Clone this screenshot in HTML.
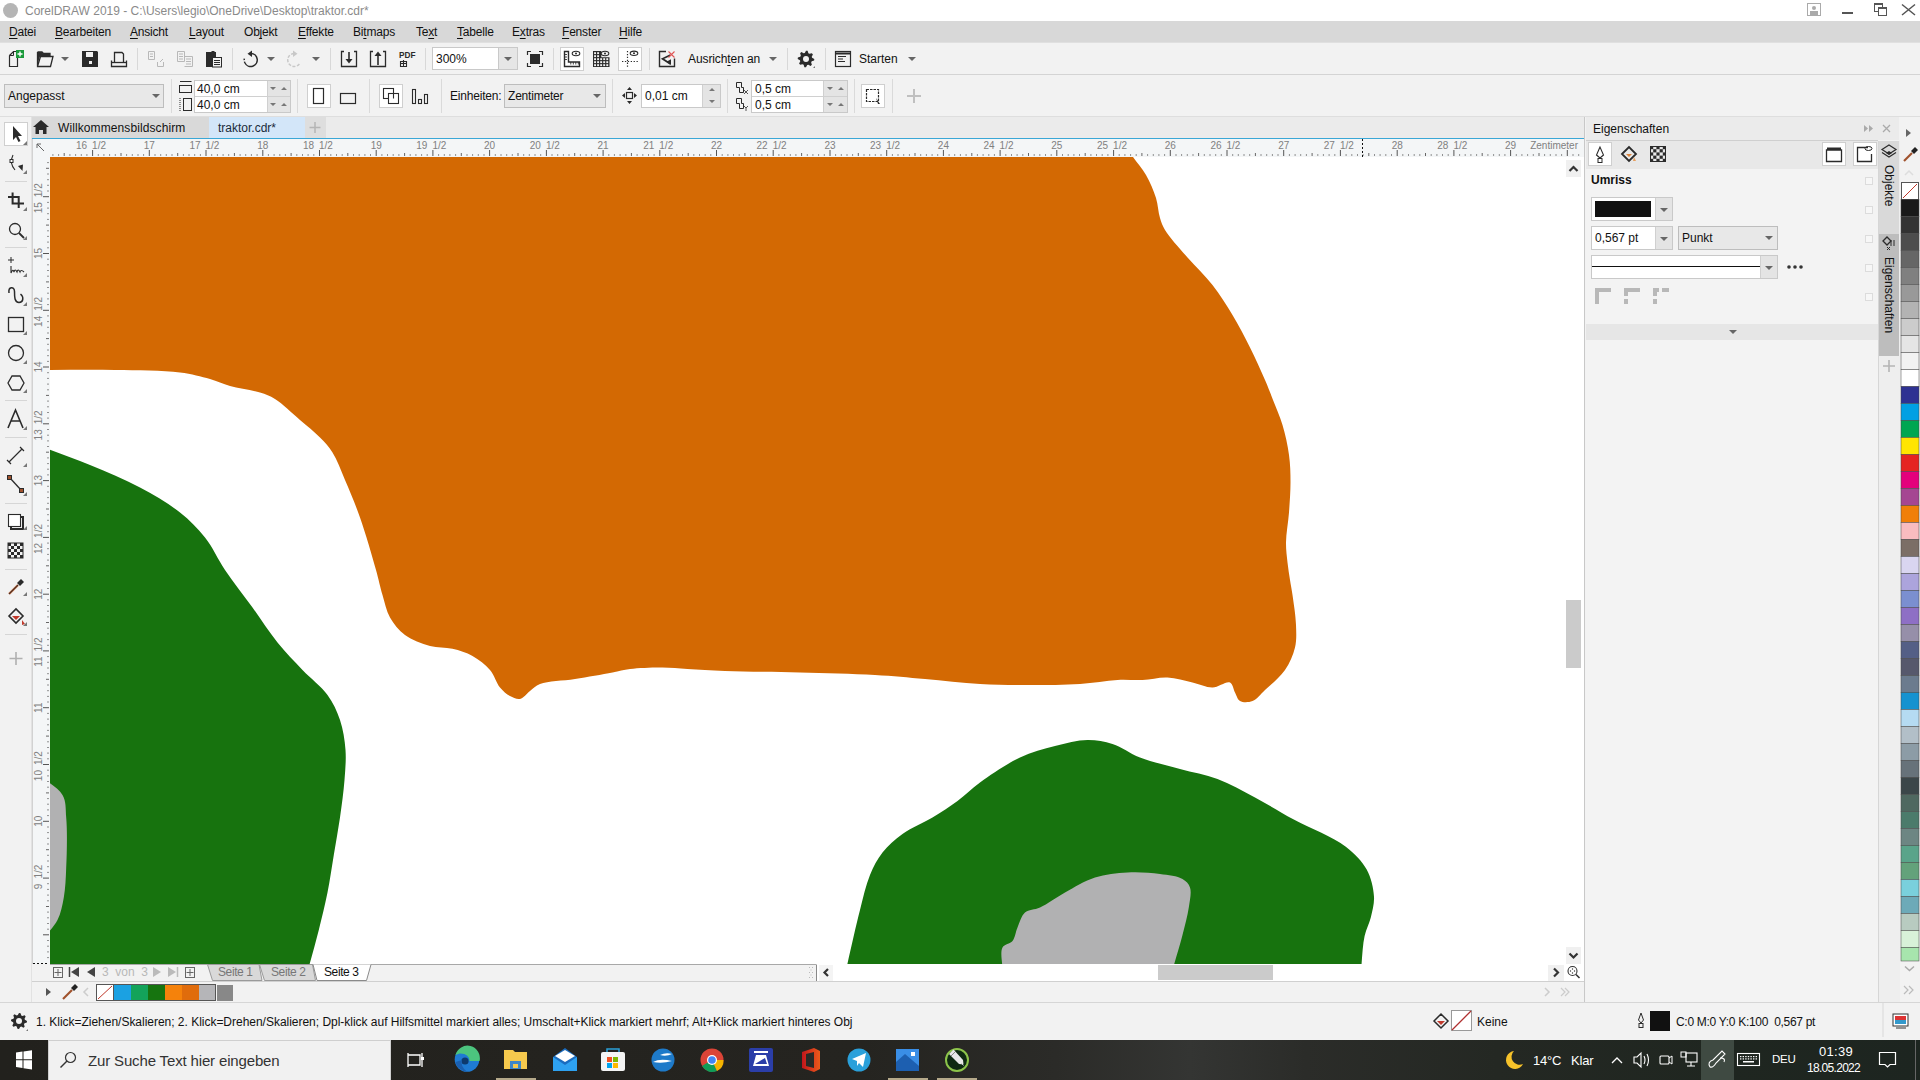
<!DOCTYPE html><html><head><meta charset="utf-8"><style>
html,body{margin:0;padding:0;width:1920px;height:1080px;overflow:hidden;background:#f2f2f2;font-family:"Liberation Sans", sans-serif;}
.t{position:absolute;white-space:nowrap;line-height:1;}
.a{position:absolute;}
svg{position:absolute;overflow:visible;}
u{text-decoration:underline;text-underline-offset:1.5px;text-decoration-thickness:1px;}
</style></head><body>
<div style="position:absolute;left:0px;top:0px;width:1920px;height:21px;background:#fff"></div>
<div style="position:absolute;left:3px;top:3px;width:15px;height:15px;background:#b5b5b5;border-radius:50%"></div>
<div class="t" style="left:25px;top:5px;font-size:12px;color:#8a8a8a;">CorelDRAW 2019 - C:\Users\legio\OneDrive\Desktop\traktor.cdr*</div>
<svg style="left:1800px;top:0" width="120" height="21"><rect x="7.5" y="3.5" width="13" height="12" fill="none" stroke="#aaa"/><circle cx="14" cy="8" r="2" fill="#aaa"/><rect x="10" y="11" width="8" height="4" fill="#aaa"/><rect x="42" y="12" width="11" height="2" fill="#555"/><rect x="74.5" y="3.5" width="8" height="8" fill="#fff" stroke="#555"/><path d="M74.5,4.5 H82.5" stroke="#555"/><rect x="78.5" y="7.5" width="8" height="8" fill="#fff" stroke="#555"/><path d="M78.5,8.5 H86.5" stroke="#555"/><path d="M102,4.5 L115,15 M115,4.5 L102,15" stroke="#555" stroke-width="1.5"/></svg>
<div style="position:absolute;left:0px;top:21px;width:1920px;height:22px;background:#d8d8d8"></div>
<div class="t" style="left:9px;top:26px;font-size:12px;color:#111;letter-spacing:-0.2px"><u>D</u>atei</div>
<div class="t" style="left:55px;top:26px;font-size:12px;color:#111;letter-spacing:-0.2px"><u>B</u>earbeiten</div>
<div class="t" style="left:130px;top:26px;font-size:12px;color:#111;letter-spacing:-0.2px"><u>A</u>nsicht</div>
<div class="t" style="left:189px;top:26px;font-size:12px;color:#111;letter-spacing:-0.2px"><u>L</u>ayout</div>
<div class="t" style="left:244px;top:26px;font-size:12px;color:#111;letter-spacing:-0.2px">Ob<u>j</u>ekt</div>
<div class="t" style="left:298px;top:26px;font-size:12px;color:#111;letter-spacing:-0.2px"><u>E</u>ffekte</div>
<div class="t" style="left:353px;top:26px;font-size:12px;color:#111;letter-spacing:-0.2px">Bi<u>t</u>maps</div>
<div class="t" style="left:416px;top:26px;font-size:12px;color:#111;letter-spacing:-0.2px">Te<u>x</u>t</div>
<div class="t" style="left:457px;top:26px;font-size:12px;color:#111;letter-spacing:-0.2px"><u>T</u>abelle</div>
<div class="t" style="left:512px;top:26px;font-size:12px;color:#111;letter-spacing:-0.2px">E<u>x</u>tras</div>
<div class="t" style="left:562px;top:26px;font-size:12px;color:#111;letter-spacing:-0.2px"><u>F</u>enster</div>
<div class="t" style="left:619px;top:26px;font-size:12px;color:#111;letter-spacing:-0.2px"><u>H</u>ilfe</div>
<div style="position:absolute;left:0px;top:43px;width:1920px;height:31px;background:#f2f2f2"></div>
<div style="position:absolute;left:0px;top:74px;width:1920px;height:1px;background:#d4d4d4"></div>
<div style="position:absolute;left:0px;top:42px;width:1920px;height:1px;background:#e0e0e0"></div>
<div style="position:absolute;left:137px;top:48px;width:1px;height:22px;background:#d8d8d8"></div>
<div style="position:absolute;left:232px;top:48px;width:1px;height:22px;background:#d8d8d8"></div>
<div style="position:absolute;left:330px;top:48px;width:1px;height:22px;background:#d8d8d8"></div>
<div style="position:absolute;left:425px;top:48px;width:1px;height:22px;background:#d8d8d8"></div>
<div style="position:absolute;left:553px;top:48px;width:1px;height:22px;background:#d8d8d8"></div>
<div style="position:absolute;left:649px;top:48px;width:1px;height:22px;background:#d8d8d8"></div>
<div style="position:absolute;left:787px;top:48px;width:1px;height:22px;background:#d8d8d8"></div>
<div style="position:absolute;left:825px;top:48px;width:1px;height:22px;background:#d8d8d8"></div>
<div style="position:absolute;left:432px;top:47px;width:67px;height:23px;background:#fff;border:1px solid #c9c9c9;box-sizing:border-box"></div>
<div style="position:absolute;left:498px;top:47px;width:20px;height:23px;background:#e6e6e6;border:1px solid #c9c9c9;box-sizing:border-box"></div>
<div class="t" style="left:436px;top:53px;font-size:12px;color:#111;">300%</div>
<div style="position:absolute;left:560px;top:47px;width:24px;height:24px;background:#fff;border:1px solid #cfcfcf;box-sizing:border-box"></div>
<div style="position:absolute;left:618px;top:47px;width:24px;height:24px;background:#fff;border:1px solid #cfcfcf;box-sizing:border-box"></div>
<div class="t" style="left:688px;top:53px;font-size:12px;color:#111;letter-spacing:-0.1px">Ausrich<u>t</u>en an</div>
<div class="t" style="left:859px;top:53px;font-size:12px;color:#111;">Starten</div>
<svg style="left:0;top:0" width="1920" height="80"><path d="M9.5,55.5 L13.5,51.5 L17.5,51.5 M9.5,55.5 L9.5,66.5 L17.5,66.5 L17.5,58" fill="none" stroke="#2b2b2b" stroke-width="1.2"/><path d="M9.5,55.5 L13.5,55.5 L13.5,51.5" fill="none" stroke="#2b2b2b"/><rect x="16" y="50" width="8" height="8" fill="#1a9a3a"/><path d="M20,51.5 V56.5 M17.5,54 H22.5" stroke="#fff" stroke-width="1.4"/><path d="M37.5,52 H42 L43.5,53.5 H50 V56 M37.5,52 V66.5 H50.5 L53,56.5 H40.5 L37.5,66.5" fill="none" stroke="#2b2b2b" stroke-width="1.3"/><path d="M37,52 H42 L43.5,54 H50 V56.5 H40 L37.5,64 Z" fill="#2b2b2b"/><path d="M61,57 H69 L65,61 Z" fill="#666"/><path d="M82,51 H97 L98,52 V67 H82 Z" fill="#2b2b2b"/><rect x="86" y="52" width="7" height="5" fill="#f2f2f2"/><rect x="89" y="61" width="3" height="3" fill="#f2f2f2"/><path d="M114.5,62 V52.5 H122 L123.5,54 V62 M111.5,60.5 V66.5 H126.5 V60.5" fill="none" stroke="#2b2b2b" stroke-width="1.3"/><path d="M111.5,62.5 H126.5" stroke="#2b2b2b" stroke-width="1.3"/><path d="M148.5,51.5 H154.5 V59.5 H148.5 Z M150,54 H153 M150,56.5 H153 M157.5,62 V66.5 H163.5 V62 M160,62 L163,59" fill="none" stroke="#b8b8b8"/><path d="M177.5,51.5 H184.5 V61.5 H177.5 Z M179,54 H183 M179,56.5 H183 M179,59 H183 M184.5,56.5 H192.5 V66.5 H184.5 M186,59 H191 M186,61.5 H191 M186,64 H191" fill="none" stroke="#b8b8b8"/><path d="M206,52 H211 L212,51 H214 L215,52 H216 V67 H206 Z" fill="#2b2b2b"/><rect x="212.5" y="57.5" width="9" height="9.5" fill="#f2f2f2" stroke="#2b2b2b"/><path d="M214,60.5 H220 M214,62.5 H220 M214,64.5 H220" stroke="#2b2b2b"/><path d="M251,53.5 A6.5,6.5 0 1 1 245,63" fill="none" stroke="#2b2b2b" stroke-width="1.5"/><path d="M245,63 A6.5,6.5 0 0 1 244.5,58" fill="none" stroke="#2b2b2b" stroke-width="1.5" stroke-dasharray="1.5 1.5"/><path d="M252,50.5 L247.5,53.8 L252,57 Z" fill="#2b2b2b"/><path d="M267,57 H275 L271,61 Z" fill="#666"/><path d="M294,53.5 A6.5,6.5 0 1 0 300,63" fill="none" stroke="#c8c8c8" stroke-width="1.5" stroke-dasharray="3 1.5"/><path d="M293,50.5 L297.5,53.8 L293,57 Z" fill="#c8c8c8"/><path d="M312,57 H320 L316,61 Z" fill="#666"/><path d="M344,51.5 H341.5 V66.5 H356.5 V51.5 H354" fill="none" stroke="#2b2b2b" stroke-width="1.3"/><path d="M349,52 V62" stroke="#2b2b2b" stroke-width="1.6"/><path d="M345.5,59 H352.5 L349,63.5 Z" fill="#2b2b2b"/><path d="M373,51.5 H370.5 V66.5 H385.5 V51.5 H383" fill="none" stroke="#2b2b2b" stroke-width="1.3"/><path d="M378,56 V65" stroke="#2b2b2b" stroke-width="1.6"/><path d="M374.5,56 H381.5 L378,51.5 Z" fill="#2b2b2b"/><text x="399" y="58.3" font-family="Liberation Sans" font-size="8.5" font-weight="bold" fill="#2b2b2b" textLength="16.5" lengthAdjust="spacingAndGlyphs">PDF</text><path d="M400.5,61.5 H406.5 V66.5 H400.5 Z M403.5,60 V66.5 M400.5,63.5 H406.5" fill="none" stroke="#2b2b2b" stroke-width="1.1"/><path d="M504,57 H512 L508,61 Z" fill="#666"/><rect x="530" y="54" width="10" height="10" fill="#2b2b2b"/><path d="M527.5,55 V51.5 H531 M539,51.5 H542.5 V55 M542.5,63 V66.5 H539 M531,66.5 H527.5 V63" fill="none" stroke="#2b2b2b" stroke-width="1.2"/><path d="M564.5,51.5 V66.5 H579.5 V62 H568.5 V51.5 Z" fill="none" stroke="#2b2b2b" stroke-width="1.4"/><path d="M565,54.5 H567 M565,57 H567 M565,59.5 H567 M570.8,62 V64.5 M573.3,62 V64.5 M575.8,62 V64.5 M578.3,62 V64.5" stroke="#2b2b2b" stroke-width="0.9"/><ellipse cx="576" cy="53.5" rx="3.8" ry="2.2" fill="#fff" stroke="#2b2b2b" stroke-width="1.1"/><circle cx="576" cy="53.5" r="1" fill="#2b2b2b"/><path d="M593,51 H601.3 V57.2 H609.5 V67 H593 Z" fill="#2b2b2b"/><rect x="594.10" y="52.20" width="1.9" height="1.9" fill="#f2f2f2"/><rect x="594.10" y="55.20" width="1.9" height="1.9" fill="#f2f2f2"/><rect x="594.10" y="58.20" width="1.9" height="1.9" fill="#f2f2f2"/><rect x="594.10" y="61.20" width="1.9" height="1.9" fill="#f2f2f2"/><rect x="594.10" y="64.20" width="1.9" height="1.9" fill="#f2f2f2"/><rect x="597.15" y="52.20" width="1.9" height="1.9" fill="#f2f2f2"/><rect x="597.15" y="55.20" width="1.9" height="1.9" fill="#f2f2f2"/><rect x="597.15" y="58.20" width="1.9" height="1.9" fill="#f2f2f2"/><rect x="597.15" y="61.20" width="1.9" height="1.9" fill="#f2f2f2"/><rect x="597.15" y="64.20" width="1.9" height="1.9" fill="#f2f2f2"/><rect x="600.20" y="58.20" width="1.9" height="1.9" fill="#f2f2f2"/><rect x="600.20" y="61.20" width="1.9" height="1.9" fill="#f2f2f2"/><rect x="600.20" y="64.20" width="1.9" height="1.9" fill="#f2f2f2"/><rect x="603.25" y="58.20" width="1.9" height="1.9" fill="#f2f2f2"/><rect x="603.25" y="61.20" width="1.9" height="1.9" fill="#f2f2f2"/><rect x="603.25" y="64.20" width="1.9" height="1.9" fill="#f2f2f2"/><rect x="606.30" y="58.20" width="1.9" height="1.9" fill="#f2f2f2"/><rect x="606.30" y="61.20" width="1.9" height="1.9" fill="#f2f2f2"/><rect x="606.30" y="64.20" width="1.9" height="1.9" fill="#f2f2f2"/><ellipse cx="605" cy="53.5" rx="3.8" ry="2.2" fill="#f2f2f2" stroke="#2b2b2b" stroke-width="1.1"/><circle cx="605" cy="53.5" r="1" fill="#2b2b2b"/><path d="M627.5,51 V67 M622,61.5 H638.5" stroke="#2b2b2b" stroke-width="1.2" stroke-dasharray="1.3 1.6"/><ellipse cx="634" cy="53.3" rx="3.8" ry="2.2" fill="#fff" stroke="#2b2b2b" stroke-width="1.1"/><circle cx="634" cy="53.3" r="1" fill="#2b2b2b"/><path d="M666,51.5 H659.5 V66.5 H674.5 V58.5" fill="none" stroke="#2b2b2b" stroke-width="1.4"/><path d="M670.5,55 L662.5,58.8 L670.5,64" fill="none" stroke="#2b2b2b" stroke-width="1.7"/><path d="M666.5,61.8 L671,59.3 V65 Z" fill="#2b2b2b"/><path d="M668.5,51.5 L674.5,57.5 M674.5,51.5 L668.5,57.5" stroke="#e05555" stroke-width="1.1"/><path d="M769,57 H777 L773,61 Z" fill="#666"/><path d="M806.00,50.70 L807.62,50.86 L808.37,53.27 L809.44,53.84 L811.87,53.13 L812.90,54.39 L811.73,56.63 L812.08,57.79 L814.30,59.00 L814.14,60.62 L811.73,61.37 L811.16,62.44 L811.87,64.87 L810.61,65.90 L808.37,64.73 L807.21,65.08 L806.00,67.30 L804.38,67.14 L803.63,64.73 L802.56,64.16 L800.13,64.87 L799.10,63.61 L800.27,61.37 L799.92,60.21 L797.70,59.00 L797.86,57.38 L800.27,56.63 L800.84,55.56 L800.13,53.13 L801.39,52.10 L803.63,53.27 L804.79,52.92 Z" fill="#2b2b2b"/><circle cx="806" cy="59" r="3" fill="#f2f2f2"/><path d="M815,66 L815,68 L813,68 Z" fill="#777"/><rect x="835.5" y="51.5" width="15" height="15" fill="none" stroke="#2b2b2b" stroke-width="1.2"/><path d="M836,53.5 H850" stroke="#2b2b2b" stroke-width="2"/><path d="M838,56.5 H846 M838,59 H843 M838,61.5 H845" stroke="#2b2b2b"/><path d="M908,57 H916 L912,61 Z" fill="#666"/></svg>
<div style="position:absolute;left:0px;top:75px;width:1920px;height:42px;background:#f2f2f2"></div>
<div style="position:absolute;left:0px;top:116px;width:1920px;height:1px;background:#dedede"></div>
<div style="position:absolute;left:171px;top:79px;width:1px;height:34px;background:#dadada"></div>
<div style="position:absolute;left:297px;top:79px;width:1px;height:34px;background:#dadada"></div>
<div style="position:absolute;left:369px;top:79px;width:1px;height:34px;background:#dadada"></div>
<div style="position:absolute;left:441px;top:79px;width:1px;height:34px;background:#dadada"></div>
<div style="position:absolute;left:612px;top:79px;width:1px;height:34px;background:#dadada"></div>
<div style="position:absolute;left:727px;top:79px;width:1px;height:34px;background:#dadada"></div>
<div style="position:absolute;left:854px;top:79px;width:1px;height:34px;background:#dadada"></div>
<div style="position:absolute;left:892px;top:79px;width:1px;height:34px;background:#dadada"></div>
<div style="position:absolute;left:4px;top:84px;width:160px;height:24px;background:#e8e8e8;border:1px solid #bdbdbd;box-sizing:border-box"></div>
<div class="t" style="left:8px;top:90px;font-size:12px;color:#111;">Angepasst</div>
<div style="position:absolute;left:194px;top:80px;width:97px;height:33px;background:#e4e4e4;border:1px solid #c9c9c9;box-sizing:border-box"></div>
<div style="position:absolute;left:195px;top:81px;width:72px;height:15px;background:#fff"></div>
<div style="position:absolute;left:195px;top:97px;width:72px;height:15px;background:#fff"></div>
<div style="position:absolute;left:195px;top:96px;width:95px;height:1px;background:#d0d0d0"></div>
<div style="position:absolute;left:267px;top:81px;width:1px;height:31px;background:#d0d0d0"></div>
<div class="t" style="left:197px;top:83px;font-size:12px;color:#111;">40,0 cm</div>
<div class="t" style="left:197px;top:99px;font-size:12px;color:#111;">40,0 cm</div>
<div style="position:absolute;left:307px;top:84px;width:24px;height:24px;background:#fff;border:1px solid #cfcfcf;box-sizing:border-box"></div>
<div style="position:absolute;left:379px;top:84px;width:24px;height:24px;background:#fff;border:1px solid #cfcfcf;box-sizing:border-box"></div>
<div class="t" style="left:450px;top:90px;font-size:12px;color:#111;letter-spacing:-0.2px">Einheiten:</div>
<div style="position:absolute;left:504px;top:84px;width:102px;height:24px;background:#e8e8e8;border:1px solid #bdbdbd;box-sizing:border-box"></div>
<div class="t" style="left:508px;top:90px;font-size:12px;color:#111;letter-spacing:-0.2px">Zentimeter</div>
<div style="position:absolute;left:641px;top:84px;width:80px;height:24px;background:#e4e4e4;border:1px solid #c9c9c9;box-sizing:border-box"></div>
<div style="position:absolute;left:642px;top:85px;width:61px;height:22px;background:#fff"></div>
<div style="position:absolute;left:702px;top:85px;width:1px;height:22px;background:#d0d0d0"></div>
<div class="t" style="left:645px;top:90px;font-size:12px;color:#111;">0,01 cm</div>
<div style="position:absolute;left:751px;top:80px;width:97px;height:33px;background:#e4e4e4;border:1px solid #c9c9c9;box-sizing:border-box"></div>
<div style="position:absolute;left:752px;top:81px;width:71px;height:15px;background:#fff"></div>
<div style="position:absolute;left:752px;top:97px;width:71px;height:15px;background:#fff"></div>
<div style="position:absolute;left:752px;top:96px;width:95px;height:1px;background:#d0d0d0"></div>
<div style="position:absolute;left:823px;top:81px;width:1px;height:31px;background:#d0d0d0"></div>
<div class="t" style="left:755px;top:83px;font-size:12px;color:#111;">0,5 cm</div>
<div class="t" style="left:755px;top:99px;font-size:12px;color:#111;">0,5 cm</div>
<div style="position:absolute;left:861px;top:84px;width:24px;height:24px;background:#fff;border:1px solid #cfcfcf;box-sizing:border-box"></div>
<svg style="left:0;top:0" width="1920" height="120"><path d="M152,94 H160 L156,98 Z" fill="#666"/><path d="M180,81.5 H191.5" stroke="#2b2b2b" /><rect x="179.5" y="85.5" width="12" height="7" fill="none" stroke="#2b2b2b"/><path d="M180,98 V111" stroke="#2b2b2b" stroke-dasharray="1 1"/><rect x="183.5" y="98.5" width="8" height="12" fill="none" stroke="#2b2b2b"/><path d="M270,87 H276 L273,90 Z M281,90 H287 L284,87 Z M270,103 H276 L273,106 Z M281,106 H287 L284,103 Z" fill="#777"/><rect x="313.5" y="88.5" width="10" height="15" fill="none" stroke="#2b2b2b" stroke-width="1.2"/><rect x="340.5" y="93.5" width="15" height="10" fill="none" stroke="#2b2b2b" stroke-width="1.2"/><rect x="383.5" y="88.5" width="10" height="10" fill="none" stroke="#2b2b2b" stroke-width="1.1"/><rect x="388.5" y="93.5" width="10" height="10" fill="#fff" stroke="#2b2b2b" stroke-width="1.1"/><path d="M388.5,93.5 H393.5 V98.5" fill="none" stroke="#2b2b2b" stroke-width="1.1"/><rect x="412.5" y="89.5" width="3" height="14" fill="none" stroke="#2b2b2b" stroke-width="1.1"/><rect x="418.5" y="99.5" width="3" height="4" fill="none" stroke="#2b2b2b" stroke-width="1.1"/><rect x="424.5" y="94.5" width="3" height="9" fill="none" stroke="#2b2b2b" stroke-width="1.1"/><path d="M593,94 H601 L597,98 Z" fill="#666"/><rect x="626.5" y="92.5" width="6" height="6" fill="none" stroke="#2b2b2b" stroke-width="1.2"/><path d="M629.5,87 L627,90 H632 Z M629.5,104 L627,101 H632 Z M622,95.5 L625,93 V98 Z M637,95.5 L634,93 V98 Z" fill="#2b2b2b"/><path d="M709,91 H715 L712,88 Z M709,100 H715 L712,103 Z" fill="#777"/><path d="M736.5,82.5 H741.5 V87.5 H743.5 V92.5 H739.5 V87.5 H736.5 Z" fill="none" stroke="#2b2b2b"/><path d="M744,90 L748,94 M748,90 L744,94" stroke="#2b2b2b" stroke-width="0.8"/><path d="M736.5,98.5 H741.5 V103.5 H743.5 V108.5 H739.5 V103.5 H736.5 Z" fill="none" stroke="#2b2b2b"/><path d="M744,106 L746,108 L748,106 M746,108 V111" stroke="#2b2b2b" stroke-width="0.8" fill="none"/><path d="M827,87 H833 L830,90 Z M838,90 H844 L841,87 Z M827,103 H833 L830,106 Z M838,106 H844 L841,103 Z" fill="#777"/><rect x="866.5" y="89.5" width="12" height="12" fill="none" stroke="#2b2b2b" stroke-width="1.2" stroke-dasharray="2.5 1"/><path d="M876,98 L880,104 L878,104 Z" fill="#2b2b2b"/><path d="M914,89 V103 M907,96 H921" stroke="#c0c0c0" stroke-width="2"/></svg>
<div style="position:absolute;left:0px;top:117px;width:32px;height:885px;background:#f2f2f2"></div>
<div style="position:absolute;left:31px;top:117px;width:1px;height:885px;background:#e2e2e2"></div>
<div style="position:absolute;left:4px;top:122px;width:24px;height:24px;background:#fff;border:1px solid #cfcfcf;box-sizing:border-box"></div>
<div style="position:absolute;left:5px;top:181px;width:22px;height:1px;background:#d6d6d6"></div>
<div style="position:absolute;left:5px;top:247px;width:22px;height:1px;background:#d6d6d6"></div>
<div style="position:absolute;left:5px;top:400px;width:22px;height:1px;background:#d6d6d6"></div>
<div style="position:absolute;left:5px;top:437px;width:22px;height:1px;background:#d6d6d6"></div>
<div style="position:absolute;left:5px;top:503px;width:22px;height:1px;background:#d6d6d6"></div>
<div style="position:absolute;left:5px;top:569px;width:22px;height:1px;background:#d6d6d6"></div>
<div style="position:absolute;left:5px;top:634px;width:22px;height:1px;background:#d6d6d6"></div>
<svg style="left:0;top:0" width="40" height="700"><path d="M13,126 L13,140 L16,137 L18.5,142 L20.5,141 L18,136 L22,136 Z" fill="#2b2b2b"/><path d="M27,145 L23,145 L27,141 Z" fill="#777"/><path d="M13,155 Q9,163 15,170" fill="none" stroke="#2b2b2b" stroke-width="1.1"/><rect x="10" y="159.5" width="3" height="3" fill="#fff" stroke="#2b2b2b"/><path d="M18,166 L23,164.5 L22.5,171 Z" fill="#2b2b2b"/><path d="M27,174 L23,174 L27,170 Z" fill="#777"/><path d="M8,197 H18.7 V208 M12.6,192.5 V203.5 H24" fill="none" stroke="#2b2b2b" stroke-width="2"/><path d="M27,211 L23,211 L27,207 Z" fill="#777"/><circle cx="15" cy="229" r="5.5" fill="none" stroke="#2b2b2b" stroke-width="1.3"/><path d="M19,233 L24,238" stroke="#2b2b2b" stroke-width="1.8"/><path d="M27,240 L23,240 L27,236 Z" fill="#777"/><path d="M11,257 V263 M8,260 H14" stroke="#2b2b2b"/><path d="M11,266 V273 Q13,268 14,272 Q15,268 17,272 Q18,268 20,272 Q21,269 24,272" fill="none" stroke="#2b2b2b" stroke-width="1.1"/><path d="M27,277 L23,277 L27,273 Z" fill="#777"/><path d="M9,293 C8,286.5 14.5,286 14.5,291.5 C14.5,297 14.5,302.5 19,302.5 C23.5,302.5 24,297 20.5,294" fill="none" stroke="#2b2b2b" stroke-width="1.5"/><path d="M27,306 L23,306 L27,302 Z" fill="#777"/><rect x="8.5" y="317.5" width="15" height="14" fill="none" stroke="#2b2b2b" stroke-width="1.3"/><path d="M27,335 L23,335 L27,331 Z" fill="#777"/><circle cx="16" cy="353" r="7.5" fill="none" stroke="#2b2b2b" stroke-width="1.3"/><path d="M27,364 L23,364 L27,360 Z" fill="#777"/><path d="M12,376 H20 L24,383 L20,390 H12 L8,383 Z" fill="none" stroke="#2b2b2b" stroke-width="1.3"/><path d="M27,393 L23,393 L27,389 Z" fill="#777"/><path d="M8,428 L15.5,410 L23,428 M10.5,421 H20.5" fill="none" stroke="#2b2b2b" stroke-width="1.6"/><path d="M27,430 L23,430 L27,426 Z" fill="#777"/><path d="M9,462 L22,449 M7,460 L11,464 M20,447 L24,451" stroke="#2b2b2b" stroke-width="1.2"/><path d="M27,467 L23,467 L27,463 Z" fill="#777"/><path d="M10,478 L21,490" stroke="#2b2b2b" stroke-width="1.3"/><rect x="7.5" y="475.5" width="4" height="4" fill="#a0522d" stroke="#2b2b2b"/><rect x="19.5" y="488.5" width="4" height="4" fill="#a0522d" stroke="#2b2b2b"/><path d="M27,496 L23,496 L27,492 Z" fill="#777"/><rect x="8.5" y="514.5" width="12" height="12" fill="#fff" stroke="#2b2b2b" stroke-width="1.1"/><path d="M21,517 H23 V529 H11 V527" fill="none" stroke="#2b2b2b" stroke-width="2"/><path d="M27,530 L23,530 L27,526 Z" fill="#777"/><rect x="8" y="543" width="3" height="3" fill="#2b2b2b"/><rect x="8" y="549" width="3" height="3" fill="#2b2b2b"/><rect x="8" y="555" width="3" height="3" fill="#2b2b2b"/><rect x="11" y="546" width="3" height="3" fill="#2b2b2b"/><rect x="11" y="552" width="3" height="3" fill="#2b2b2b"/><rect x="14" y="543" width="3" height="3" fill="#2b2b2b"/><rect x="14" y="549" width="3" height="3" fill="#2b2b2b"/><rect x="14" y="555" width="3" height="3" fill="#2b2b2b"/><rect x="17" y="546" width="3" height="3" fill="#2b2b2b"/><rect x="17" y="552" width="3" height="3" fill="#2b2b2b"/><rect x="20" y="543" width="3" height="3" fill="#2b2b2b"/><rect x="20" y="549" width="3" height="3" fill="#2b2b2b"/><rect x="20" y="555" width="3" height="3" fill="#2b2b2b"/><rect x="8" y="543" width="15" height="15" fill="none" stroke="#2b2b2b"/><path d="M9,594 L18,585" stroke="#a0522d" stroke-width="2.2"/><path d="M9,594 L18,585" stroke="#2b2b2b" stroke-width="0.8"/><path d="M17,583 L21,579 L24,582 L20,586 Z" fill="#2b2b2b"/><path d="M27,596 L23,596 L27,592 Z" fill="#777"/><path d="M9,616 L16,609 L23,616 L16,623 Z" fill="none" stroke="#2b2b2b" stroke-width="1.6"/><path d="M12,616 H20 L16,620 Z" fill="#c0392b"/><path d="M22,620 L25,624 L22,625 Z" fill="#c0392b"/><path d="M27,626 L23,626 L27,622 Z" fill="#777"/><path d="M16,652 V665 M9.5,658.5 H22.5" stroke="#b0b0b0" stroke-width="1.6"/></svg>
<div style="position:absolute;left:32px;top:117px;width:1552px;height:21px;background:#ebebeb"></div>
<div style="position:absolute;left:32px;top:117px;width:177px;height:21px;background:#d9d9d9"></div>
<div style="position:absolute;left:209px;top:117px;width:96px;height:21px;background:#d3e6f9"></div>
<div style="position:absolute;left:305px;top:117px;width:21px;height:21px;background:#dedede"></div>
<svg style="left:0;top:0" width="400" height="140"><path d="M41,120 L33,127 H35.5 V134 H39 V130 H43 V134 H46.5 V127 H49 Z" fill="#2b2b2b"/><path d="M315,122 V133 M309.5,127.5 H320.5" stroke="#b5b5b5" stroke-width="1.5"/></svg>
<div class="t" style="left:58px;top:122px;font-size:12px;color:#111;letter-spacing:0.1px">Willkommensbildschirm</div>
<div class="t" style="left:218px;top:122px;font-size:12px;color:#1a2a3a;">traktor.cdr*</div>
<div style="position:absolute;left:32px;top:138px;width:1552px;height:1px;background:#3aa7d6"></div>
<div style="position:absolute;left:32px;top:139px;width:1552px;height:18px;background:#f4f6f7"></div>
<div style="position:absolute;left:32px;top:139px;width:18px;height:825px;background:#f4f6f7"></div>
<div style="position:absolute;left:32px;top:139px;width:1px;height:825px;background:#d2d2d2"></div>
<svg style="left:0;top:0" width="1600" height="160"><path d="M52.9,154 V156" stroke="#777" stroke-width="0.8"/><path d="M58.6,154 V156" stroke="#777" stroke-width="0.8"/><path d="M64.2,153 V156" stroke="#666"/><path d="M69.9,154 V156" stroke="#777" stroke-width="0.8"/><path d="M75.6,154 V156" stroke="#777" stroke-width="0.8"/><path d="M81.3,154 V156" stroke="#777" stroke-width="0.8"/><path d="M86.9,154 V156" stroke="#777" stroke-width="0.8"/><path d="M92.6,150 V156" stroke="#555"/><path d="M98.3,154 V156" stroke="#777" stroke-width="0.8"/><path d="M103.9,154 V156" stroke="#777" stroke-width="0.8"/><path d="M109.6,154 V156" stroke="#777" stroke-width="0.8"/><path d="M115.3,154 V156" stroke="#777" stroke-width="0.8"/><path d="M121.0,153 V156" stroke="#666"/><path d="M126.6,154 V156" stroke="#777" stroke-width="0.8"/><path d="M132.3,154 V156" stroke="#777" stroke-width="0.8"/><path d="M138.0,154 V156" stroke="#777" stroke-width="0.8"/><path d="M143.6,154 V156" stroke="#777" stroke-width="0.8"/><path d="M149.3,150 V156" stroke="#555"/><path d="M155.0,154 V156" stroke="#777" stroke-width="0.8"/><path d="M160.7,154 V156" stroke="#777" stroke-width="0.8"/><path d="M166.3,154 V156" stroke="#777" stroke-width="0.8"/><path d="M172.0,154 V156" stroke="#777" stroke-width="0.8"/><path d="M177.7,153 V156" stroke="#666"/><path d="M183.4,154 V156" stroke="#777" stroke-width="0.8"/><path d="M189.0,154 V156" stroke="#777" stroke-width="0.8"/><path d="M194.7,154 V156" stroke="#777" stroke-width="0.8"/><path d="M200.4,154 V156" stroke="#777" stroke-width="0.8"/><path d="M206.0,150 V156" stroke="#555"/><path d="M211.7,154 V156" stroke="#777" stroke-width="0.8"/><path d="M217.4,154 V156" stroke="#777" stroke-width="0.8"/><path d="M223.1,154 V156" stroke="#777" stroke-width="0.8"/><path d="M228.7,154 V156" stroke="#777" stroke-width="0.8"/><path d="M234.4,153 V156" stroke="#666"/><path d="M240.1,154 V156" stroke="#777" stroke-width="0.8"/><path d="M245.7,154 V156" stroke="#777" stroke-width="0.8"/><path d="M251.4,154 V156" stroke="#777" stroke-width="0.8"/><path d="M257.1,154 V156" stroke="#777" stroke-width="0.8"/><path d="M262.8,150 V156" stroke="#555"/><path d="M268.4,154 V156" stroke="#777" stroke-width="0.8"/><path d="M274.1,154 V156" stroke="#777" stroke-width="0.8"/><path d="M279.8,154 V156" stroke="#777" stroke-width="0.8"/><path d="M285.4,154 V156" stroke="#777" stroke-width="0.8"/><path d="M291.1,153 V156" stroke="#666"/><path d="M296.8,154 V156" stroke="#777" stroke-width="0.8"/><path d="M302.5,154 V156" stroke="#777" stroke-width="0.8"/><path d="M308.1,154 V156" stroke="#777" stroke-width="0.8"/><path d="M313.8,154 V156" stroke="#777" stroke-width="0.8"/><path d="M319.5,150 V156" stroke="#555"/><path d="M325.2,154 V156" stroke="#777" stroke-width="0.8"/><path d="M330.8,154 V156" stroke="#777" stroke-width="0.8"/><path d="M336.5,154 V156" stroke="#777" stroke-width="0.8"/><path d="M342.2,154 V156" stroke="#777" stroke-width="0.8"/><path d="M347.8,153 V156" stroke="#666"/><path d="M353.5,154 V156" stroke="#777" stroke-width="0.8"/><path d="M359.2,154 V156" stroke="#777" stroke-width="0.8"/><path d="M364.9,154 V156" stroke="#777" stroke-width="0.8"/><path d="M370.5,154 V156" stroke="#777" stroke-width="0.8"/><path d="M376.2,150 V156" stroke="#555"/><path d="M381.9,154 V156" stroke="#777" stroke-width="0.8"/><path d="M387.5,154 V156" stroke="#777" stroke-width="0.8"/><path d="M393.2,154 V156" stroke="#777" stroke-width="0.8"/><path d="M398.9,154 V156" stroke="#777" stroke-width="0.8"/><path d="M404.6,153 V156" stroke="#666"/><path d="M410.2,154 V156" stroke="#777" stroke-width="0.8"/><path d="M415.9,154 V156" stroke="#777" stroke-width="0.8"/><path d="M421.6,154 V156" stroke="#777" stroke-width="0.8"/><path d="M427.2,154 V156" stroke="#777" stroke-width="0.8"/><path d="M432.9,150 V156" stroke="#555"/><path d="M438.6,154 V156" stroke="#777" stroke-width="0.8"/><path d="M444.3,154 V156" stroke="#777" stroke-width="0.8"/><path d="M449.9,154 V156" stroke="#777" stroke-width="0.8"/><path d="M455.6,154 V156" stroke="#777" stroke-width="0.8"/><path d="M461.3,153 V156" stroke="#666"/><path d="M467.0,154 V156" stroke="#777" stroke-width="0.8"/><path d="M472.6,154 V156" stroke="#777" stroke-width="0.8"/><path d="M478.3,154 V156" stroke="#777" stroke-width="0.8"/><path d="M484.0,154 V156" stroke="#777" stroke-width="0.8"/><path d="M489.6,150 V156" stroke="#555"/><path d="M495.3,154 V156" stroke="#777" stroke-width="0.8"/><path d="M501.0,154 V156" stroke="#777" stroke-width="0.8"/><path d="M506.7,154 V156" stroke="#777" stroke-width="0.8"/><path d="M512.3,154 V156" stroke="#777" stroke-width="0.8"/><path d="M518.0,153 V156" stroke="#666"/><path d="M523.7,154 V156" stroke="#777" stroke-width="0.8"/><path d="M529.3,154 V156" stroke="#777" stroke-width="0.8"/><path d="M535.0,154 V156" stroke="#777" stroke-width="0.8"/><path d="M540.7,154 V156" stroke="#777" stroke-width="0.8"/><path d="M546.4,150 V156" stroke="#555"/><path d="M552.0,154 V156" stroke="#777" stroke-width="0.8"/><path d="M557.7,154 V156" stroke="#777" stroke-width="0.8"/><path d="M563.4,154 V156" stroke="#777" stroke-width="0.8"/><path d="M569.0,154 V156" stroke="#777" stroke-width="0.8"/><path d="M574.7,153 V156" stroke="#666"/><path d="M580.4,154 V156" stroke="#777" stroke-width="0.8"/><path d="M586.1,154 V156" stroke="#777" stroke-width="0.8"/><path d="M591.7,154 V156" stroke="#777" stroke-width="0.8"/><path d="M597.4,154 V156" stroke="#777" stroke-width="0.8"/><path d="M603.1,150 V156" stroke="#555"/><path d="M608.8,154 V156" stroke="#777" stroke-width="0.8"/><path d="M614.4,154 V156" stroke="#777" stroke-width="0.8"/><path d="M620.1,154 V156" stroke="#777" stroke-width="0.8"/><path d="M625.8,154 V156" stroke="#777" stroke-width="0.8"/><path d="M631.4,153 V156" stroke="#666"/><path d="M637.1,154 V156" stroke="#777" stroke-width="0.8"/><path d="M642.8,154 V156" stroke="#777" stroke-width="0.8"/><path d="M648.5,154 V156" stroke="#777" stroke-width="0.8"/><path d="M654.1,154 V156" stroke="#777" stroke-width="0.8"/><path d="M659.8,150 V156" stroke="#555"/><path d="M665.5,154 V156" stroke="#777" stroke-width="0.8"/><path d="M671.1,154 V156" stroke="#777" stroke-width="0.8"/><path d="M676.8,154 V156" stroke="#777" stroke-width="0.8"/><path d="M682.5,154 V156" stroke="#777" stroke-width="0.8"/><path d="M688.2,153 V156" stroke="#666"/><path d="M693.8,154 V156" stroke="#777" stroke-width="0.8"/><path d="M699.5,154 V156" stroke="#777" stroke-width="0.8"/><path d="M705.2,154 V156" stroke="#777" stroke-width="0.8"/><path d="M710.8,154 V156" stroke="#777" stroke-width="0.8"/><path d="M716.5,150 V156" stroke="#555"/><path d="M722.2,154 V156" stroke="#777" stroke-width="0.8"/><path d="M727.9,154 V156" stroke="#777" stroke-width="0.8"/><path d="M733.5,154 V156" stroke="#777" stroke-width="0.8"/><path d="M739.2,154 V156" stroke="#777" stroke-width="0.8"/><path d="M744.9,153 V156" stroke="#666"/><path d="M750.6,154 V156" stroke="#777" stroke-width="0.8"/><path d="M756.2,154 V156" stroke="#777" stroke-width="0.8"/><path d="M761.9,154 V156" stroke="#777" stroke-width="0.8"/><path d="M767.6,154 V156" stroke="#777" stroke-width="0.8"/><path d="M773.2,150 V156" stroke="#555"/><path d="M778.9,154 V156" stroke="#777" stroke-width="0.8"/><path d="M784.6,154 V156" stroke="#777" stroke-width="0.8"/><path d="M790.3,154 V156" stroke="#777" stroke-width="0.8"/><path d="M795.9,154 V156" stroke="#777" stroke-width="0.8"/><path d="M801.6,153 V156" stroke="#666"/><path d="M807.3,154 V156" stroke="#777" stroke-width="0.8"/><path d="M812.9,154 V156" stroke="#777" stroke-width="0.8"/><path d="M818.6,154 V156" stroke="#777" stroke-width="0.8"/><path d="M824.3,154 V156" stroke="#777" stroke-width="0.8"/><path d="M830.0,150 V156" stroke="#555"/><path d="M835.6,154 V156" stroke="#777" stroke-width="0.8"/><path d="M841.3,154 V156" stroke="#777" stroke-width="0.8"/><path d="M847.0,154 V156" stroke="#777" stroke-width="0.8"/><path d="M852.6,154 V156" stroke="#777" stroke-width="0.8"/><path d="M858.3,153 V156" stroke="#666"/><path d="M864.0,154 V156" stroke="#777" stroke-width="0.8"/><path d="M869.7,154 V156" stroke="#777" stroke-width="0.8"/><path d="M875.3,154 V156" stroke="#777" stroke-width="0.8"/><path d="M881.0,154 V156" stroke="#777" stroke-width="0.8"/><path d="M886.7,150 V156" stroke="#555"/><path d="M892.4,154 V156" stroke="#777" stroke-width="0.8"/><path d="M898.0,154 V156" stroke="#777" stroke-width="0.8"/><path d="M903.7,154 V156" stroke="#777" stroke-width="0.8"/><path d="M909.4,154 V156" stroke="#777" stroke-width="0.8"/><path d="M915.0,153 V156" stroke="#666"/><path d="M920.7,154 V156" stroke="#777" stroke-width="0.8"/><path d="M926.4,154 V156" stroke="#777" stroke-width="0.8"/><path d="M932.1,154 V156" stroke="#777" stroke-width="0.8"/><path d="M937.7,154 V156" stroke="#777" stroke-width="0.8"/><path d="M943.4,150 V156" stroke="#555"/><path d="M949.1,154 V156" stroke="#777" stroke-width="0.8"/><path d="M954.7,154 V156" stroke="#777" stroke-width="0.8"/><path d="M960.4,154 V156" stroke="#777" stroke-width="0.8"/><path d="M966.1,154 V156" stroke="#777" stroke-width="0.8"/><path d="M971.8,153 V156" stroke="#666"/><path d="M977.4,154 V156" stroke="#777" stroke-width="0.8"/><path d="M983.1,154 V156" stroke="#777" stroke-width="0.8"/><path d="M988.8,154 V156" stroke="#777" stroke-width="0.8"/><path d="M994.4,154 V156" stroke="#777" stroke-width="0.8"/><path d="M1000.1,150 V156" stroke="#555"/><path d="M1005.8,154 V156" stroke="#777" stroke-width="0.8"/><path d="M1011.5,154 V156" stroke="#777" stroke-width="0.8"/><path d="M1017.1,154 V156" stroke="#777" stroke-width="0.8"/><path d="M1022.8,154 V156" stroke="#777" stroke-width="0.8"/><path d="M1028.5,153 V156" stroke="#666"/><path d="M1034.2,154 V156" stroke="#777" stroke-width="0.8"/><path d="M1039.8,154 V156" stroke="#777" stroke-width="0.8"/><path d="M1045.5,154 V156" stroke="#777" stroke-width="0.8"/><path d="M1051.2,154 V156" stroke="#777" stroke-width="0.8"/><path d="M1056.8,150 V156" stroke="#555"/><path d="M1062.5,154 V156" stroke="#777" stroke-width="0.8"/><path d="M1068.2,154 V156" stroke="#777" stroke-width="0.8"/><path d="M1073.9,154 V156" stroke="#777" stroke-width="0.8"/><path d="M1079.5,154 V156" stroke="#777" stroke-width="0.8"/><path d="M1085.2,153 V156" stroke="#666"/><path d="M1090.9,154 V156" stroke="#777" stroke-width="0.8"/><path d="M1096.5,154 V156" stroke="#777" stroke-width="0.8"/><path d="M1102.2,154 V156" stroke="#777" stroke-width="0.8"/><path d="M1107.9,154 V156" stroke="#777" stroke-width="0.8"/><path d="M1113.6,150 V156" stroke="#555"/><path d="M1119.2,154 V156" stroke="#777" stroke-width="0.8"/><path d="M1124.9,154 V156" stroke="#777" stroke-width="0.8"/><path d="M1130.6,154 V156" stroke="#777" stroke-width="0.8"/><path d="M1136.2,154 V156" stroke="#777" stroke-width="0.8"/><path d="M1141.9,153 V156" stroke="#666"/><path d="M1147.6,154 V156" stroke="#777" stroke-width="0.8"/><path d="M1153.3,154 V156" stroke="#777" stroke-width="0.8"/><path d="M1158.9,154 V156" stroke="#777" stroke-width="0.8"/><path d="M1164.6,154 V156" stroke="#777" stroke-width="0.8"/><path d="M1170.3,150 V156" stroke="#555"/><path d="M1176.0,154 V156" stroke="#777" stroke-width="0.8"/><path d="M1181.6,154 V156" stroke="#777" stroke-width="0.8"/><path d="M1187.3,154 V156" stroke="#777" stroke-width="0.8"/><path d="M1193.0,154 V156" stroke="#777" stroke-width="0.8"/><path d="M1198.6,153 V156" stroke="#666"/><path d="M1204.3,154 V156" stroke="#777" stroke-width="0.8"/><path d="M1210.0,154 V156" stroke="#777" stroke-width="0.8"/><path d="M1215.7,154 V156" stroke="#777" stroke-width="0.8"/><path d="M1221.3,154 V156" stroke="#777" stroke-width="0.8"/><path d="M1227.0,150 V156" stroke="#555"/><path d="M1232.7,154 V156" stroke="#777" stroke-width="0.8"/><path d="M1238.3,154 V156" stroke="#777" stroke-width="0.8"/><path d="M1244.0,154 V156" stroke="#777" stroke-width="0.8"/><path d="M1249.7,154 V156" stroke="#777" stroke-width="0.8"/><path d="M1255.4,153 V156" stroke="#666"/><path d="M1261.0,154 V156" stroke="#777" stroke-width="0.8"/><path d="M1266.7,154 V156" stroke="#777" stroke-width="0.8"/><path d="M1272.4,154 V156" stroke="#777" stroke-width="0.8"/><path d="M1278.0,154 V156" stroke="#777" stroke-width="0.8"/><path d="M1283.7,150 V156" stroke="#555"/><path d="M1289.4,154 V156" stroke="#777" stroke-width="0.8"/><path d="M1295.1,154 V156" stroke="#777" stroke-width="0.8"/><path d="M1300.7,154 V156" stroke="#777" stroke-width="0.8"/><path d="M1306.4,154 V156" stroke="#777" stroke-width="0.8"/><path d="M1312.1,153 V156" stroke="#666"/><path d="M1317.8,154 V156" stroke="#777" stroke-width="0.8"/><path d="M1323.4,154 V156" stroke="#777" stroke-width="0.8"/><path d="M1329.1,154 V156" stroke="#777" stroke-width="0.8"/><path d="M1334.8,154 V156" stroke="#777" stroke-width="0.8"/><path d="M1340.4,150 V156" stroke="#555"/><path d="M1346.1,154 V156" stroke="#777" stroke-width="0.8"/><path d="M1351.8,154 V156" stroke="#777" stroke-width="0.8"/><path d="M1357.5,154 V156" stroke="#777" stroke-width="0.8"/><path d="M1363.1,154 V156" stroke="#777" stroke-width="0.8"/><path d="M1368.8,153 V156" stroke="#666"/><path d="M1374.5,154 V156" stroke="#777" stroke-width="0.8"/><path d="M1380.1,154 V156" stroke="#777" stroke-width="0.8"/><path d="M1385.8,154 V156" stroke="#777" stroke-width="0.8"/><path d="M1391.5,154 V156" stroke="#777" stroke-width="0.8"/><path d="M1397.2,150 V156" stroke="#555"/><path d="M1402.8,154 V156" stroke="#777" stroke-width="0.8"/><path d="M1408.5,154 V156" stroke="#777" stroke-width="0.8"/><path d="M1414.2,154 V156" stroke="#777" stroke-width="0.8"/><path d="M1419.8,154 V156" stroke="#777" stroke-width="0.8"/><path d="M1425.5,153 V156" stroke="#666"/><path d="M1431.2,154 V156" stroke="#777" stroke-width="0.8"/><path d="M1436.9,154 V156" stroke="#777" stroke-width="0.8"/><path d="M1442.5,154 V156" stroke="#777" stroke-width="0.8"/><path d="M1448.2,154 V156" stroke="#777" stroke-width="0.8"/><path d="M1453.9,150 V156" stroke="#555"/><path d="M1459.6,154 V156" stroke="#777" stroke-width="0.8"/><path d="M1465.2,154 V156" stroke="#777" stroke-width="0.8"/><path d="M1470.9,154 V156" stroke="#777" stroke-width="0.8"/><path d="M1476.6,154 V156" stroke="#777" stroke-width="0.8"/><path d="M1482.2,153 V156" stroke="#666"/><path d="M1487.9,154 V156" stroke="#777" stroke-width="0.8"/><path d="M1493.6,154 V156" stroke="#777" stroke-width="0.8"/><path d="M1499.3,154 V156" stroke="#777" stroke-width="0.8"/><path d="M1504.9,154 V156" stroke="#777" stroke-width="0.8"/><path d="M1510.6,150 V156" stroke="#555"/><path d="M1516.3,154 V156" stroke="#777" stroke-width="0.8"/><path d="M1521.9,154 V156" stroke="#777" stroke-width="0.8"/><path d="M1527.6,154 V156" stroke="#777" stroke-width="0.8"/><path d="M1533.3,154 V156" stroke="#777" stroke-width="0.8"/><path d="M1539.0,153 V156" stroke="#666"/><path d="M1544.6,154 V156" stroke="#777" stroke-width="0.8"/><path d="M1550.3,154 V156" stroke="#777" stroke-width="0.8"/><path d="M1556.0,154 V156" stroke="#777" stroke-width="0.8"/><path d="M1561.6,154 V156" stroke="#777" stroke-width="0.8"/><path d="M1567.3,150 V156" stroke="#555"/><path d="M1573.0,154 V156" stroke="#777" stroke-width="0.8"/><path d="M1578.7,154 V156" stroke="#777" stroke-width="0.8"/><text x="87.1" y="148.5" font-family="Liberation Sans" font-size="10" fill="#808080" text-anchor="end">16</text><text x="92.1" y="148.5" font-family="Liberation Sans" font-size="10" fill="#808080">1/2</text><text x="149.3" y="148.5" font-family="Liberation Sans" font-size="10" fill="#808080" text-anchor="middle">17</text><text x="200.5" y="148.5" font-family="Liberation Sans" font-size="10" fill="#808080" text-anchor="end">17</text><text x="205.5" y="148.5" font-family="Liberation Sans" font-size="10" fill="#808080">1/2</text><text x="262.8" y="148.5" font-family="Liberation Sans" font-size="10" fill="#808080" text-anchor="middle">18</text><text x="314.0" y="148.5" font-family="Liberation Sans" font-size="10" fill="#808080" text-anchor="end">18</text><text x="319.0" y="148.5" font-family="Liberation Sans" font-size="10" fill="#808080">1/2</text><text x="376.2" y="148.5" font-family="Liberation Sans" font-size="10" fill="#808080" text-anchor="middle">19</text><text x="427.4" y="148.5" font-family="Liberation Sans" font-size="10" fill="#808080" text-anchor="end">19</text><text x="432.4" y="148.5" font-family="Liberation Sans" font-size="10" fill="#808080">1/2</text><text x="489.6" y="148.5" font-family="Liberation Sans" font-size="10" fill="#808080" text-anchor="middle">20</text><text x="540.9" y="148.5" font-family="Liberation Sans" font-size="10" fill="#808080" text-anchor="end">20</text><text x="545.9" y="148.5" font-family="Liberation Sans" font-size="10" fill="#808080">1/2</text><text x="603.1" y="148.5" font-family="Liberation Sans" font-size="10" fill="#808080" text-anchor="middle">21</text><text x="654.3" y="148.5" font-family="Liberation Sans" font-size="10" fill="#808080" text-anchor="end">21</text><text x="659.3" y="148.5" font-family="Liberation Sans" font-size="10" fill="#808080">1/2</text><text x="716.5" y="148.5" font-family="Liberation Sans" font-size="10" fill="#808080" text-anchor="middle">22</text><text x="767.7" y="148.5" font-family="Liberation Sans" font-size="10" fill="#808080" text-anchor="end">22</text><text x="772.7" y="148.5" font-family="Liberation Sans" font-size="10" fill="#808080">1/2</text><text x="830.0" y="148.5" font-family="Liberation Sans" font-size="10" fill="#808080" text-anchor="middle">23</text><text x="881.2" y="148.5" font-family="Liberation Sans" font-size="10" fill="#808080" text-anchor="end">23</text><text x="886.2" y="148.5" font-family="Liberation Sans" font-size="10" fill="#808080">1/2</text><text x="943.4" y="148.5" font-family="Liberation Sans" font-size="10" fill="#808080" text-anchor="middle">24</text><text x="994.6" y="148.5" font-family="Liberation Sans" font-size="10" fill="#808080" text-anchor="end">24</text><text x="999.6" y="148.5" font-family="Liberation Sans" font-size="10" fill="#808080">1/2</text><text x="1056.8" y="148.5" font-family="Liberation Sans" font-size="10" fill="#808080" text-anchor="middle">25</text><text x="1108.1" y="148.5" font-family="Liberation Sans" font-size="10" fill="#808080" text-anchor="end">25</text><text x="1113.1" y="148.5" font-family="Liberation Sans" font-size="10" fill="#808080">1/2</text><text x="1170.3" y="148.5" font-family="Liberation Sans" font-size="10" fill="#808080" text-anchor="middle">26</text><text x="1221.5" y="148.5" font-family="Liberation Sans" font-size="10" fill="#808080" text-anchor="end">26</text><text x="1226.5" y="148.5" font-family="Liberation Sans" font-size="10" fill="#808080">1/2</text><text x="1283.7" y="148.5" font-family="Liberation Sans" font-size="10" fill="#808080" text-anchor="middle">27</text><text x="1334.9" y="148.5" font-family="Liberation Sans" font-size="10" fill="#808080" text-anchor="end">27</text><text x="1339.9" y="148.5" font-family="Liberation Sans" font-size="10" fill="#808080">1/2</text><text x="1397.2" y="148.5" font-family="Liberation Sans" font-size="10" fill="#808080" text-anchor="middle">28</text><text x="1448.4" y="148.5" font-family="Liberation Sans" font-size="10" fill="#808080" text-anchor="end">28</text><text x="1453.4" y="148.5" font-family="Liberation Sans" font-size="10" fill="#808080">1/2</text><text x="1510.6" y="148.5" font-family="Liberation Sans" font-size="10" fill="#808080" text-anchor="middle">29</text><text x="1578" y="148.5" font-family="Liberation Sans" font-size="10" fill="#808080" text-anchor="end">Zentimeter</text><path d="M1362.5,139 V157" stroke="#111" stroke-dasharray="2 2"/><path d="M37,144 L44,151 M37,144 V148 M37,144 H41" stroke="#666" fill="none"/></svg>
<svg style="left:0;top:0" width="60" height="1000"><path d="M47,162.6 H49" stroke="#777" stroke-width="0.8"/><path d="M46,168.3 H49" stroke="#666"/><path d="M47,174.0 H49" stroke="#777" stroke-width="0.8"/><path d="M47,179.7 H49" stroke="#777" stroke-width="0.8"/><path d="M47,185.3 H49" stroke="#777" stroke-width="0.8"/><path d="M47,191.0 H49" stroke="#777" stroke-width="0.8"/><path d="M43,196.7 H49" stroke="#555"/><path d="M47,202.4 H49" stroke="#777" stroke-width="0.8"/><path d="M47,208.1 H49" stroke="#777" stroke-width="0.8"/><path d="M47,213.7 H49" stroke="#777" stroke-width="0.8"/><path d="M47,219.4 H49" stroke="#777" stroke-width="0.8"/><path d="M46,225.1 H49" stroke="#666"/><path d="M47,230.8 H49" stroke="#777" stroke-width="0.8"/><path d="M47,236.4 H49" stroke="#777" stroke-width="0.8"/><path d="M47,242.1 H49" stroke="#777" stroke-width="0.8"/><path d="M47,247.8 H49" stroke="#777" stroke-width="0.8"/><path d="M43,253.5 H49" stroke="#555"/><path d="M47,259.2 H49" stroke="#777" stroke-width="0.8"/><path d="M47,264.8 H49" stroke="#777" stroke-width="0.8"/><path d="M47,270.5 H49" stroke="#777" stroke-width="0.8"/><path d="M47,276.2 H49" stroke="#777" stroke-width="0.8"/><path d="M46,281.9 H49" stroke="#666"/><path d="M47,287.5 H49" stroke="#777" stroke-width="0.8"/><path d="M47,293.2 H49" stroke="#777" stroke-width="0.8"/><path d="M47,298.9 H49" stroke="#777" stroke-width="0.8"/><path d="M47,304.6 H49" stroke="#777" stroke-width="0.8"/><path d="M43,310.3 H49" stroke="#555"/><path d="M47,315.9 H49" stroke="#777" stroke-width="0.8"/><path d="M47,321.6 H49" stroke="#777" stroke-width="0.8"/><path d="M47,327.3 H49" stroke="#777" stroke-width="0.8"/><path d="M47,333.0 H49" stroke="#777" stroke-width="0.8"/><path d="M46,338.6 H49" stroke="#666"/><path d="M47,344.3 H49" stroke="#777" stroke-width="0.8"/><path d="M47,350.0 H49" stroke="#777" stroke-width="0.8"/><path d="M47,355.7 H49" stroke="#777" stroke-width="0.8"/><path d="M47,361.4 H49" stroke="#777" stroke-width="0.8"/><path d="M43,367.0 H49" stroke="#555"/><path d="M47,372.7 H49" stroke="#777" stroke-width="0.8"/><path d="M47,378.4 H49" stroke="#777" stroke-width="0.8"/><path d="M47,384.1 H49" stroke="#777" stroke-width="0.8"/><path d="M47,389.8 H49" stroke="#777" stroke-width="0.8"/><path d="M46,395.4 H49" stroke="#666"/><path d="M47,401.1 H49" stroke="#777" stroke-width="0.8"/><path d="M47,406.8 H49" stroke="#777" stroke-width="0.8"/><path d="M47,412.5 H49" stroke="#777" stroke-width="0.8"/><path d="M47,418.1 H49" stroke="#777" stroke-width="0.8"/><path d="M43,423.8 H49" stroke="#555"/><path d="M47,429.5 H49" stroke="#777" stroke-width="0.8"/><path d="M47,435.2 H49" stroke="#777" stroke-width="0.8"/><path d="M47,440.9 H49" stroke="#777" stroke-width="0.8"/><path d="M47,446.5 H49" stroke="#777" stroke-width="0.8"/><path d="M46,452.2 H49" stroke="#666"/><path d="M47,457.9 H49" stroke="#777" stroke-width="0.8"/><path d="M47,463.6 H49" stroke="#777" stroke-width="0.8"/><path d="M47,469.2 H49" stroke="#777" stroke-width="0.8"/><path d="M47,474.9 H49" stroke="#777" stroke-width="0.8"/><path d="M43,480.6 H49" stroke="#555"/><path d="M47,486.3 H49" stroke="#777" stroke-width="0.8"/><path d="M47,492.0 H49" stroke="#777" stroke-width="0.8"/><path d="M47,497.6 H49" stroke="#777" stroke-width="0.8"/><path d="M47,503.3 H49" stroke="#777" stroke-width="0.8"/><path d="M46,509.0 H49" stroke="#666"/><path d="M47,514.7 H49" stroke="#777" stroke-width="0.8"/><path d="M47,520.3 H49" stroke="#777" stroke-width="0.8"/><path d="M47,526.0 H49" stroke="#777" stroke-width="0.8"/><path d="M47,531.7 H49" stroke="#777" stroke-width="0.8"/><path d="M43,537.4 H49" stroke="#555"/><path d="M47,543.1 H49" stroke="#777" stroke-width="0.8"/><path d="M47,548.7 H49" stroke="#777" stroke-width="0.8"/><path d="M47,554.4 H49" stroke="#777" stroke-width="0.8"/><path d="M47,560.1 H49" stroke="#777" stroke-width="0.8"/><path d="M46,565.8 H49" stroke="#666"/><path d="M47,571.4 H49" stroke="#777" stroke-width="0.8"/><path d="M47,577.1 H49" stroke="#777" stroke-width="0.8"/><path d="M47,582.8 H49" stroke="#777" stroke-width="0.8"/><path d="M47,588.5 H49" stroke="#777" stroke-width="0.8"/><path d="M43,594.2 H49" stroke="#555"/><path d="M47,599.8 H49" stroke="#777" stroke-width="0.8"/><path d="M47,605.5 H49" stroke="#777" stroke-width="0.8"/><path d="M47,611.2 H49" stroke="#777" stroke-width="0.8"/><path d="M47,616.9 H49" stroke="#777" stroke-width="0.8"/><path d="M46,622.5 H49" stroke="#666"/><path d="M47,628.2 H49" stroke="#777" stroke-width="0.8"/><path d="M47,633.9 H49" stroke="#777" stroke-width="0.8"/><path d="M47,639.6 H49" stroke="#777" stroke-width="0.8"/><path d="M47,645.3 H49" stroke="#777" stroke-width="0.8"/><path d="M43,650.9 H49" stroke="#555"/><path d="M47,656.6 H49" stroke="#777" stroke-width="0.8"/><path d="M47,662.3 H49" stroke="#777" stroke-width="0.8"/><path d="M47,668.0 H49" stroke="#777" stroke-width="0.8"/><path d="M47,673.7 H49" stroke="#777" stroke-width="0.8"/><path d="M46,679.3 H49" stroke="#666"/><path d="M47,685.0 H49" stroke="#777" stroke-width="0.8"/><path d="M47,690.7 H49" stroke="#777" stroke-width="0.8"/><path d="M47,696.4 H49" stroke="#777" stroke-width="0.8"/><path d="M47,702.0 H49" stroke="#777" stroke-width="0.8"/><path d="M43,707.7 H49" stroke="#555"/><path d="M47,713.4 H49" stroke="#777" stroke-width="0.8"/><path d="M47,719.1 H49" stroke="#777" stroke-width="0.8"/><path d="M47,724.8 H49" stroke="#777" stroke-width="0.8"/><path d="M47,730.4 H49" stroke="#777" stroke-width="0.8"/><path d="M46,736.1 H49" stroke="#666"/><path d="M47,741.8 H49" stroke="#777" stroke-width="0.8"/><path d="M47,747.5 H49" stroke="#777" stroke-width="0.8"/><path d="M47,753.1 H49" stroke="#777" stroke-width="0.8"/><path d="M47,758.8 H49" stroke="#777" stroke-width="0.8"/><path d="M43,764.5 H49" stroke="#555"/><path d="M47,770.2 H49" stroke="#777" stroke-width="0.8"/><path d="M47,775.9 H49" stroke="#777" stroke-width="0.8"/><path d="M47,781.5 H49" stroke="#777" stroke-width="0.8"/><path d="M47,787.2 H49" stroke="#777" stroke-width="0.8"/><path d="M46,792.9 H49" stroke="#666"/><path d="M47,798.6 H49" stroke="#777" stroke-width="0.8"/><path d="M47,804.2 H49" stroke="#777" stroke-width="0.8"/><path d="M47,809.9 H49" stroke="#777" stroke-width="0.8"/><path d="M47,815.6 H49" stroke="#777" stroke-width="0.8"/><path d="M43,821.3 H49" stroke="#555"/><path d="M47,827.0 H49" stroke="#777" stroke-width="0.8"/><path d="M47,832.6 H49" stroke="#777" stroke-width="0.8"/><path d="M47,838.3 H49" stroke="#777" stroke-width="0.8"/><path d="M47,844.0 H49" stroke="#777" stroke-width="0.8"/><path d="M46,849.7 H49" stroke="#666"/><path d="M47,855.3 H49" stroke="#777" stroke-width="0.8"/><path d="M47,861.0 H49" stroke="#777" stroke-width="0.8"/><path d="M47,866.7 H49" stroke="#777" stroke-width="0.8"/><path d="M47,872.4 H49" stroke="#777" stroke-width="0.8"/><path d="M43,878.1 H49" stroke="#555"/><path d="M47,883.7 H49" stroke="#777" stroke-width="0.8"/><path d="M47,889.4 H49" stroke="#777" stroke-width="0.8"/><path d="M47,895.1 H49" stroke="#777" stroke-width="0.8"/><path d="M47,900.8 H49" stroke="#777" stroke-width="0.8"/><path d="M46,906.5 H49" stroke="#666"/><path d="M47,912.1 H49" stroke="#777" stroke-width="0.8"/><path d="M47,917.8 H49" stroke="#777" stroke-width="0.8"/><path d="M47,923.5 H49" stroke="#777" stroke-width="0.8"/><path d="M47,929.2 H49" stroke="#777" stroke-width="0.8"/><path d="M43,934.8 H49" stroke="#555"/><path d="M47,940.5 H49" stroke="#777" stroke-width="0.8"/><path d="M47,946.2 H49" stroke="#777" stroke-width="0.8"/><path d="M47,951.9 H49" stroke="#777" stroke-width="0.8"/><path d="M47,957.6 H49" stroke="#777" stroke-width="0.8"/><text transform="translate(41.5,202.2) rotate(-90)" font-family="Liberation Sans" font-size="10" fill="#808080" text-anchor="end">15</text><text transform="translate(41.5,197.2) rotate(-90)" font-family="Liberation Sans" font-size="10" fill="#808080">1/2</text><text transform="translate(41.5,253.5) rotate(-90)" font-family="Liberation Sans" font-size="10" fill="#808080" text-anchor="middle">15</text><text transform="translate(41.5,315.8) rotate(-90)" font-family="Liberation Sans" font-size="10" fill="#808080" text-anchor="end">14</text><text transform="translate(41.5,310.8) rotate(-90)" font-family="Liberation Sans" font-size="10" fill="#808080">1/2</text><text transform="translate(41.5,367.0) rotate(-90)" font-family="Liberation Sans" font-size="10" fill="#808080" text-anchor="middle">14</text><text transform="translate(41.5,429.3) rotate(-90)" font-family="Liberation Sans" font-size="10" fill="#808080" text-anchor="end">13</text><text transform="translate(41.5,424.3) rotate(-90)" font-family="Liberation Sans" font-size="10" fill="#808080">1/2</text><text transform="translate(41.5,480.6) rotate(-90)" font-family="Liberation Sans" font-size="10" fill="#808080" text-anchor="middle">13</text><text transform="translate(41.5,542.9) rotate(-90)" font-family="Liberation Sans" font-size="10" fill="#808080" text-anchor="end">12</text><text transform="translate(41.5,537.9) rotate(-90)" font-family="Liberation Sans" font-size="10" fill="#808080">1/2</text><text transform="translate(41.5,594.2) rotate(-90)" font-family="Liberation Sans" font-size="10" fill="#808080" text-anchor="middle">12</text><text transform="translate(41.5,656.4) rotate(-90)" font-family="Liberation Sans" font-size="10" fill="#808080" text-anchor="end">11</text><text transform="translate(41.5,651.4) rotate(-90)" font-family="Liberation Sans" font-size="10" fill="#808080">1/2</text><text transform="translate(41.5,707.7) rotate(-90)" font-family="Liberation Sans" font-size="10" fill="#808080" text-anchor="middle">11</text><text transform="translate(41.5,770.0) rotate(-90)" font-family="Liberation Sans" font-size="10" fill="#808080" text-anchor="end">10</text><text transform="translate(41.5,765.0) rotate(-90)" font-family="Liberation Sans" font-size="10" fill="#808080">1/2</text><text transform="translate(41.5,821.3) rotate(-90)" font-family="Liberation Sans" font-size="10" fill="#808080" text-anchor="middle">10</text><text transform="translate(41.5,883.6) rotate(-90)" font-family="Liberation Sans" font-size="10" fill="#808080" text-anchor="end">9</text><text transform="translate(41.5,878.6) rotate(-90)" font-family="Liberation Sans" font-size="10" fill="#808080">1/2</text><path d="M33,963.5 H49" stroke="#111" stroke-dasharray="2 2"/></svg>
<div style="position:absolute;left:50px;top:157px;width:1534px;height:807px;background:#fff"></div>
<svg style="left:50px;top:157px;overflow:hidden" width="1534" height="807" viewBox="50 157 1534 807"><path d="M40,140 L1133,140 L1133.0,157.0 C1137.3,163.0 1142.2,168.4 1146.0,175.0 C1150.0,182.0 1153.6,190.5 1156.0,198.0 C1158.1,204.8 1158.2,212.3 1160.0,218.0 C1161.4,222.6 1162.3,225.4 1165.0,230.0 C1169.5,237.6 1179.7,248.4 1187.5,257.5 C1195.5,266.8 1205.0,275.3 1212.5,285.0 C1219.9,294.5 1226.3,304.6 1232.5,315.0 C1238.8,325.5 1244.5,336.6 1250.0,347.5 C1255.4,358.3 1260.9,370.4 1265.0,380.0 C1268.2,387.4 1270.3,392.9 1273.0,400.0 C1276.1,407.9 1279.9,416.2 1282.5,425.0 C1285.3,434.4 1287.7,445.2 1289.0,455.0 C1290.3,464.3 1290.5,473.1 1290.5,482.5 C1290.5,492.3 1289.7,502.5 1289.0,512.5 C1288.2,522.5 1286.1,533.5 1286.0,542.5 C1285.9,549.8 1286.8,556.1 1287.5,562.5 C1288.2,568.5 1289.1,574.4 1290.0,580.0 C1290.8,585.2 1291.7,589.1 1292.5,595.0 C1293.7,603.3 1295.7,615.7 1296.0,625.0 C1296.3,633.0 1296.7,640.2 1295.0,647.5 C1293.2,655.2 1289.7,663.1 1285.0,670.0 C1279.9,677.4 1271.0,684.4 1265.0,690.0 C1260.4,694.3 1257.0,699.3 1252.5,701.0 C1248.6,702.5 1243.0,702.7 1240.0,701.0 C1237.4,699.5 1236.6,695.5 1235.0,692.5 C1233.3,689.3 1232.9,683.8 1230.0,682.5 C1226.2,680.8 1218.5,687.4 1212.5,687.5 C1206.1,687.6 1199.6,684.1 1192.5,682.5 C1184.7,680.7 1175.9,677.9 1167.5,677.5 C1159.2,677.1 1150.8,679.6 1142.5,680.0 C1134.2,680.4 1126.7,679.5 1117.5,680.0 C1106.2,680.6 1093.4,683.2 1080.0,684.0 C1064.5,685.0 1046.7,685.0 1030.0,685.0 C1013.3,685.0 997.0,684.9 980.0,684.0 C962.1,683.0 942.9,680.5 925.0,679.0 C907.9,677.5 893.4,676.0 875.0,675.0 C852.5,673.7 825.0,673.2 800.0,672.5 C775.0,671.8 745.7,671.8 725.0,671.0 C710.4,670.5 698.7,669.6 687.5,669.0 C678.3,668.5 671.4,667.6 662.5,667.5 C652.4,667.4 639.1,667.9 630.0,669.0 C623.2,669.8 619.4,671.2 612.5,672.5 C602.4,674.4 587.3,677.1 575.0,679.0 C563.1,680.9 547.9,680.9 540.0,684.0 C535.4,685.8 533.3,688.5 530.0,691.0 C526.6,693.5 523.5,698.3 520.0,699.0 C516.8,699.6 513.2,697.7 510.0,696.0 C506.5,694.1 503.0,691.2 500.0,687.5 C496.2,683.0 494.4,675.1 490.0,670.0 C485.4,664.6 478.8,659.6 472.5,656.0 C466.3,652.5 459.5,650.4 452.5,648.8 C445.3,647.0 437.5,648.1 430.0,646.0 C421.7,643.7 411.8,640.1 405.0,635.0 C398.7,630.3 393.7,624.1 390.0,617.5 C386.2,610.8 384.8,602.7 382.5,595.0 C380.1,586.9 378.8,579.8 376.0,570.0 C372.0,555.7 365.6,533.4 360.0,517.5 C355.2,503.8 349.9,491.5 345.0,480.0 C340.8,470.1 337.2,460.0 332.5,452.5 C328.7,446.4 324.9,442.5 320.0,437.5 C314.3,431.7 307.1,426.1 300.0,420.0 C292.2,413.3 282.6,403.7 275.0,399.0 C269.6,395.7 266.0,394.4 260.0,392.5 C251.8,389.9 238.9,388.5 230.0,386.0 C222.6,383.9 217.4,381.1 210.0,379.0 C201.1,376.5 192.0,374.0 180.0,372.5 C162.5,370.3 137.4,370.4 115.0,370.0 C90.9,369.5 65.0,370.0 40.0,370.0 Z" fill="#d36903"/><path d="M40.0,446.0 C56.7,452.3 73.4,458.1 90.0,465.0 C106.8,472.0 124.5,479.2 140.0,487.5 C154.4,495.2 168.7,503.5 180.0,512.5 C189.8,520.3 197.6,528.1 205.0,537.5 C212.7,547.2 217.6,558.9 225.0,570.0 C233.2,582.2 243.6,595.2 252.5,607.5 C261.1,619.3 268.8,631.8 277.5,642.5 C285.6,652.5 294.1,661.1 302.5,670.0 C310.7,678.6 321.1,686.1 327.5,695.0 C333.2,702.9 337.0,711.1 340.0,720.0 C343.1,729.3 344.8,740.0 345.5,750.0 C346.2,760.0 345.3,769.5 344.5,780.0 C343.6,791.8 341.8,805.0 340.0,817.5 C338.2,830.0 335.8,842.5 333.8,855.0 C331.7,867.5 330.0,880.0 327.5,892.5 C325.0,905.0 321.9,917.3 318.8,930.0 C315.5,943.1 311.6,956.7 308.0,970.0 L40,970 Z" fill="#17730e"/><path d="M40.0,776.0 C47.5,782.3 58.2,787.5 62.5,795.0 C66.3,801.6 65.5,808.5 66.2,817.5 C67.4,830.8 66.9,853.0 66.2,867.5 C65.8,878.8 65.4,888.3 63.8,897.5 C62.3,905.6 61.1,912.9 57.5,920.0 C53.5,927.8 45.8,934.7 40.0,942.0 Z" fill="#b1b1b2"/><path d="M846.0,970.0 C850.7,950.0 855.5,927.3 860.0,910.0 C863.4,896.7 865.8,885.2 870.0,875.0 C873.5,866.4 877.2,859.3 882.5,852.5 C888.0,845.5 894.8,839.6 902.5,834.0 C911.2,827.8 923.1,823.2 932.5,817.5 C941.3,812.2 949.5,806.9 957.5,801.0 C965.4,795.2 971.2,788.8 980.0,782.5 C991.2,774.4 1006.7,763.7 1020.0,757.5 C1031.7,752.0 1043.5,748.9 1055.0,746.0 C1065.9,743.2 1077.4,740.1 1087.5,740.0 C1096.4,739.9 1104.2,741.4 1112.5,744.0 C1121.7,746.9 1129.8,753.6 1140.0,757.5 C1151.9,762.1 1166.9,765.4 1180.0,769.0 C1192.7,772.5 1205.2,774.4 1217.5,779.0 C1230.2,783.8 1242.5,790.9 1255.0,797.5 C1267.9,804.4 1279.8,812.0 1293.8,819.6 C1309.7,828.3 1332.9,836.8 1345.8,846.7 C1355.1,853.9 1362.0,861.0 1366.7,869.6 C1371.2,877.8 1373.5,888.2 1374.0,896.7 C1374.4,904.0 1372.4,910.8 1370.8,917.5 C1369.2,923.9 1366.2,928.8 1364.6,936.0 C1362.5,945.5 1362.2,958.7 1361.0,970.0 Z" fill="#17730e"/><path d="M1002.5,970.0 C1002.5,962.5 999.9,952.4 1002.5,947.5 C1004.4,943.9 1010.0,944.1 1012.5,941.0 C1015.2,937.6 1015.5,932.1 1017.5,927.5 C1019.6,922.6 1021.2,915.8 1025.0,912.5 C1028.7,909.3 1034.5,910.0 1040.0,907.5 C1047.4,904.1 1056.2,897.3 1065.0,892.5 C1074.5,887.3 1084.5,880.8 1095.0,877.5 C1105.4,874.2 1116.6,873.1 1127.5,872.5 C1138.3,871.9 1150.2,872.7 1160.0,874.0 C1168.2,875.1 1177.3,875.9 1182.5,879.0 C1186.1,881.1 1188.7,883.7 1190.0,887.5 C1191.7,892.5 1189.8,900.3 1188.8,907.5 C1187.5,916.0 1185.0,925.3 1182.5,935.0 C1179.7,946.0 1175.8,958.3 1172.5,970.0 Z" fill="#b1b1b2"/></svg>
<div style="position:absolute;left:1566px;top:600px;width:15px;height:68px;background:#cbcbcb"></div>
<svg style="left:0;top:0" width="1600" height="1000"><rect x="1566" y="160" width="15" height="17" fill="#f0f0f0"/><path d="M1569.5,171 L1573.5,167 L1577.5,171" fill="none" stroke="#333" stroke-width="2.2"/><rect x="1566" y="947" width="15" height="17" fill="#f0f0f0"/><path d="M1569.5,953.5 L1573.5,957.5 L1577.5,953.5" fill="none" stroke="#333" stroke-width="2.2"/></svg>
<div style="position:absolute;left:1584px;top:117px;width:1px;height:885px;background:#c8c8c8"></div>
<div style="position:absolute;left:32px;top:964px;width:1552px;height:17px;background:#f2f2f2"></div>
<div style="position:absolute;left:50px;top:964px;width:766px;height:1px;background:#a8a8a8"></div>
<div style="position:absolute;left:816px;top:964px;width:768px;height:17px;background:#fff"></div>
<div style="position:absolute;left:1158px;top:965px;width:115px;height:15px;background:#cbcbcb"></div>
<div style="position:absolute;left:32px;top:981px;width:1552px;height:1px;background:#d0d0d0"></div>
<svg style="left:0;top:0" width="1600" height="1000"><rect x="53.5" y="967.5" width="9" height="10" fill="none" stroke="#666"/><path d="M58,969 V976 M54.5,972.5 H61.5" stroke="#666"/><path d="M69.5,967 V977" stroke="#444" stroke-width="1.5"/><path d="M79,967 V977 L71,972 Z" fill="#444"/><path d="M95,967 V977 L87,972 Z" fill="#444"/><path d="M153,967 V977 L161,972 Z" fill="#bbb"/><path d="M168,967 V977 L176,972 Z" fill="#bbb"/><path d="M177.5,967 V977" stroke="#bbb" stroke-width="1.5"/><rect x="185.5" y="967.5" width="9" height="10" fill="none" stroke="#666"/><path d="M190,969 V976 M186.5,972.5 H193.5" stroke="#666"/><path d="M207.5,964.5 L212.5,980.5 H262 L259,964.5 Z" fill="#d9d9d9" stroke="#9a9a9a"/><path d="M259.5,964.5 L264.5,980.5 H315.5 L312.5,964.5 Z" fill="#d9d9d9" stroke="#9a9a9a"/><path d="M313,964.5 L317,980.5 H366.5 L371,964.5" fill="#fff" stroke="#8a8a8a"/><path d="M1516,965 H1539" stroke="none"/><rect x="1548" y="965" width="16" height="16" fill="#f0f0f0"/><path d="M1554,968.5 L1558,972.5 L1554,976.5" fill="none" stroke="#333" stroke-width="2.2"/><rect x="819" y="965" width="14" height="16" fill="#f4f4f4"/><path d="M828,969 L824.5,972.5 L828,976" fill="none" stroke="#333" stroke-width="2.2"/><path d="M816.5,964.5 V981" stroke="#888"/><path d="M809.5,967 V968 M812.5,967 V968 M811,969.5 V970.5 M809.5,972 V973 M812.5,972 V973 M811,974.5 V975.5 M809.5,977 V978 M812.5,977 V978" stroke="#bbb"/><circle cx="1572.5" cy="971" r="4.5" fill="none" stroke="#333" stroke-width="1.1"/><path d="M1576,974.5 L1579.5,978" stroke="#333" stroke-width="1.6"/><circle cx="1572.5" cy="969" r="0.7" fill="#333"/><circle cx="1572.5" cy="973" r="0.7" fill="#333"/><circle cx="1570.5" cy="971" r="0.7" fill="#333"/><circle cx="1574.5" cy="971" r="0.7" fill="#333"/></svg>
<div class="t" style="left:102px;top:966px;font-size:12px;color:#b8b8b8;">3&nbsp;&nbsp;von&nbsp;&nbsp;3</div>
<div class="t" style="left:218px;top:966px;font-size:12px;color:#777;letter-spacing:-0.4px">Seite 1</div>
<div class="t" style="left:271px;top:966px;font-size:12px;color:#777;letter-spacing:-0.4px">Seite 2</div>
<div class="t" style="left:324px;top:966px;font-size:12px;color:#111;letter-spacing:-0.4px">Seite 3</div>
<div style="position:absolute;left:32px;top:982px;width:1552px;height:20px;background:#f2f2f2"></div>
<div style="position:absolute;left:0px;top:1002px;width:1920px;height:1px;background:#d6d6d6"></div>
<svg style="left:0;top:0" width="1600" height="1010"><path d="M46,988 L51,992 L46,996 Z" fill="#555"/><path d="M63,999 L72,990" stroke="#a0522d" stroke-width="2.2"/><path d="M71,988 L75,984 L78,987 L74,991 Z" fill="#222"/><path d="M88,988 L84,992 L88,996" fill="none" stroke="#ccc" stroke-width="1.5"/><rect x="96.5" y="984.5" width="17" height="16" fill="#fff" stroke="#555"/><path d="M98,999 L112,986" stroke="#c0392b"/><rect x="114" y="984" width="17" height="17" fill="#1ba1e2"/><rect x="131" y="984" width="17" height="17" fill="#13a35a"/><rect x="148" y="984" width="17" height="17" fill="#16740f"/><rect x="165" y="984" width="17" height="17" fill="#f5820b"/><rect x="182" y="984" width="17" height="17" fill="#e06c0c"/><rect x="199" y="984" width="17" height="17" fill="#b5b5b8"/><rect x="96.5" y="984.5" width="119" height="16" fill="none" stroke="#555"/><rect x="217" y="985" width="16" height="16" fill="#888"/><path d="M1545,988 L1549,992 L1545,996" fill="none" stroke="#ccc" stroke-width="1.5"/><path d="M1561,988 L1565,992 L1561,996 M1565,988 L1569,992 L1565,996" fill="none" stroke="#ccc" stroke-width="1.2"/></svg>
<div style="position:absolute;left:1586px;top:117px;width:292px;height:885px;background:#f3f3f3"></div>
<div style="position:absolute;left:1586px;top:117px;width:313px;height:23px;background:#ebebeb"></div>
<div class="t" style="left:1593px;top:123px;font-size:12px;color:#111;">Eigenschaften</div>
<div style="position:absolute;left:1586px;top:140px;width:292px;height:1px;background:#cfcfcf"></div>
<div style="position:absolute;left:1586px;top:141px;width:292px;height:28px;background:#e8e8e8"></div>
<svg style="left:0;top:0" width="1920" height="400"><path d="M1864,125 L1868,128.5 L1864,132 Z M1869,125 L1873,128.5 L1869,132 Z" fill="#aaa"/><path d="M1883,125 L1890,132 M1890,125 L1883,132" stroke="#aaa" stroke-width="1.3"/><rect x="1588.5" y="142.5" width="23" height="23" fill="#fff" stroke="#cfcfcf"/><path d="M1600,147 L1596.5,155 L1600,158 L1603.5,155 Z" fill="none" stroke="#2b2b2b" stroke-width="1.1"/><rect x="1598" y="158.5" width="4" height="4" fill="none" stroke="#2b2b2b"/><path d="M1622,154 L1629,147 L1636,154 L1629,161 Z" fill="none" stroke="#2b2b2b" stroke-width="1.8"/><path d="M1626,154 H1632 L1629,157 Z" fill="#d9833c"/><path d="M1634,157 L1636,161 L1633,161 Z" fill="#e8a060"/><rect x="1650.0" y="146.0" width="3.2" height="3.2" fill="#2b2b2b"/><rect x="1650.0" y="152.4" width="3.2" height="3.2" fill="#2b2b2b"/><rect x="1650.0" y="158.8" width="3.2" height="3.2" fill="#2b2b2b"/><rect x="1653.2" y="149.2" width="3.2" height="3.2" fill="#2b2b2b"/><rect x="1653.2" y="155.6" width="3.2" height="3.2" fill="#2b2b2b"/><rect x="1656.4" y="146.0" width="3.2" height="3.2" fill="#2b2b2b"/><rect x="1656.4" y="152.4" width="3.2" height="3.2" fill="#2b2b2b"/><rect x="1656.4" y="158.8" width="3.2" height="3.2" fill="#2b2b2b"/><rect x="1659.6" y="149.2" width="3.2" height="3.2" fill="#2b2b2b"/><rect x="1659.6" y="155.6" width="3.2" height="3.2" fill="#2b2b2b"/><rect x="1662.8" y="146.0" width="3.2" height="3.2" fill="#2b2b2b"/><rect x="1662.8" y="152.4" width="3.2" height="3.2" fill="#2b2b2b"/><rect x="1662.8" y="158.8" width="3.2" height="3.2" fill="#2b2b2b"/><rect x="1650.5" y="146.5" width="15" height="15" fill="none" stroke="#2b2b2b"/><rect x="1822.5" y="142.5" width="23" height="23" fill="#fff" stroke="#cfcfcf"/><rect x="1853.5" y="142.5" width="23" height="23" fill="#fff" stroke="#cfcfcf"/><path d="M1826.5,150 V161.5 H1841.5 V150 Z" fill="none" stroke="#2b2b2b" stroke-width="1.3"/><path d="M1827,147.5 H1841 V150 H1827 Z" fill="#2b2b2b"/><path d="M1868,147.5 H1857.5 V161.5 H1871.5 V154" fill="none" stroke="#2b2b2b" stroke-width="1.3"/><ellipse cx="1868.5" cy="148.5" rx="3.5" ry="2" fill="none" stroke="#2b2b2b"/></svg>
<div class="t" style="left:1591px;top:174px;font-size:12px;color:#111;"><b>Umriss</b></div>
<div style="position:absolute;left:1591px;top:197px;width:82px;height:24px;background:#e4e4e4;border:1px solid #c9c9c9;box-sizing:border-box"></div>
<div style="position:absolute;left:1592px;top:198px;width:63px;height:22px;background:#fff"></div>
<div style="position:absolute;left:1655px;top:198px;width:1px;height:22px;background:#d0d0d0"></div>
<div style="position:absolute;left:1595px;top:201px;width:56px;height:16px;background:#111"></div>
<div style="position:absolute;left:1591px;top:226px;width:82px;height:24px;background:#e4e4e4;border:1px solid #c9c9c9;box-sizing:border-box"></div>
<div style="position:absolute;left:1592px;top:227px;width:63px;height:22px;background:#fff"></div>
<div style="position:absolute;left:1655px;top:227px;width:1px;height:22px;background:#d0d0d0"></div>
<div class="t" style="left:1595px;top:232px;font-size:12px;color:#111;">0,567 pt</div>
<div style="position:absolute;left:1678px;top:226px;width:100px;height:24px;background:#e8e8e8;border:1px solid #bdbdbd;box-sizing:border-box"></div>
<div class="t" style="left:1682px;top:232px;font-size:12px;color:#111;">Punkt</div>
<div style="position:absolute;left:1591px;top:255px;width:187px;height:24px;background:#e4e4e4;border:1px solid #c9c9c9;box-sizing:border-box"></div>
<div style="position:absolute;left:1592px;top:256px;width:168px;height:22px;background:#fff"></div>
<div style="position:absolute;left:1760px;top:256px;width:1px;height:22px;background:#d0d0d0"></div>
<div style="position:absolute;left:1592px;top:266px;width:168px;height:1px;background:#111"></div>
<svg style="left:0;top:0" width="1920" height="400"><path d="M1660,208 H1668 L1664,212 Z" fill="#666"/><path d="M1660,237 H1668 L1664,241 Z" fill="#666"/><path d="M1765,266 H1773 L1769,270 Z" fill="#666"/><path d="M1725,205 H1733 L1729,209 Z" fill="none"/><path d="M1765,236 H1773 L1769,240 Z" fill="#666"/><circle cx="1789" cy="267" r="1.8" fill="#333"/><circle cx="1795" cy="267" r="1.8" fill="#333"/><circle cx="1801" cy="267" r="1.8" fill="#333"/><path d="M1595,288 H1611 V292 H1599 V304 H1595 Z" fill="#b8b8b8"/><path d="M1624,288 H1640 V292 H1628 V296 H1624 Z M1624,299 H1628 V304 H1624 Z" fill="#b8b8b8"/><path d="M1653,288 H1659 V292 H1657 V296 H1653 Z M1662,288 H1669 V292 H1662 Z M1653,299 H1657 V304 H1653 Z" fill="#b8b8b8"/><rect x="1865.5" y="177.5" width="7" height="7" fill="#f7f7f7" stroke="#dcdcdc"/><rect x="1865.5" y="206.5" width="7" height="7" fill="#f7f7f7" stroke="#dcdcdc"/><rect x="1865.5" y="235.5" width="7" height="7" fill="#f7f7f7" stroke="#dcdcdc"/><rect x="1865.5" y="264.5" width="7" height="7" fill="#f7f7f7" stroke="#dcdcdc"/><rect x="1865.5" y="293.5" width="7" height="7" fill="#f7f7f7" stroke="#dcdcdc"/><rect x="1586" y="324" width="292" height="16" fill="#e6e6e6"/><path d="M1729,330 H1737 L1733,334 Z" fill="#666"/></svg>
<div style="position:absolute;left:1878px;top:141px;width:22px;height:861px;background:#eeeeee"></div>
<div style="position:absolute;left:1878px;top:141px;width:1px;height:861px;background:#d6d6d6"></div>
<div style="position:absolute;left:1879px;top:141px;width:20px;height:93px;background:#d9d9d9"></div>
<div style="position:absolute;left:1879px;top:234px;width:20px;height:122px;background:#bdbdbd"></div>
<svg style="left:0;top:0" width="1920" height="400"><path d="M1889,145 L1896,149.5 L1889,154 L1882,149.5 Z" fill="none" stroke="#2b2b2b" stroke-width="1.2"/><path d="M1882,152.5 L1889,157 L1896,152.5" fill="none" stroke="#2b2b2b" stroke-width="1.2"/><path d="M1886,153 L1889,155 L1892,153 L1889,151 Z" fill="#2b2b2b"/><path d="M1883,241 L1887,237 L1891,241 L1887,245 Z" fill="none" stroke="#2b2b2b" stroke-width="1.3"/><path d="M1891,246 V240 M1894,246 V240 M1887,247 L1890,250 M1890,247 L1887,250" stroke="#2b2b2b"/><path d="M1889,360 V372 M1883,366 H1895" stroke="#b5b5b5" stroke-width="1.6"/></svg>
<div class="t" style="left:1883px;top:165px;font-size:12px;color:#111;transform-origin:0 0;transform:translate(12px,0) rotate(90deg)">Objekte</div>
<div class="t" style="left:1883px;top:257px;font-size:12px;color:#111;transform-origin:0 0;transform:translate(12px,0) rotate(90deg)">Eigenschaften</div>
<div style="position:absolute;left:1900px;top:117px;width:20px;height:885px;background:#f2f2f2"></div>
<svg style="left:0;top:0" width="1920" height="1010"><path d="M1906,129 L1911,133 L1906,137 Z" fill="#666"/><path d="M1904,161 L1912,153" stroke="#a0522d" stroke-width="2.2"/><path d="M1911,151 L1915,147 L1918,150 L1914,154 Z" fill="#222"/><path d="M1905,175 L1909,171 L1913,175" fill="none" stroke="#ddd" stroke-width="1.5"/><rect x="1901.5" y="182.5" width="17" height="17" fill="#fff" stroke="#555"/><path d="M1903,198 L1917,184" stroke="#c0392b"/><rect x="1901" y="199.50" width="18" height="17.00" fill="#1a1a1a" stroke="#444" stroke-width="0.5"/><rect x="1901" y="216.50" width="18" height="17.00" fill="#333333" stroke="#444" stroke-width="0.5"/><rect x="1901" y="233.50" width="18" height="17.00" fill="#4d4d4d" stroke="#444" stroke-width="0.5"/><rect x="1901" y="250.50" width="18" height="17.00" fill="#666666" stroke="#444" stroke-width="0.5"/><rect x="1901" y="267.50" width="18" height="17.00" fill="#808080" stroke="#444" stroke-width="0.5"/><rect x="1901" y="284.50" width="18" height="17.00" fill="#999999" stroke="#444" stroke-width="0.5"/><rect x="1901" y="301.50" width="18" height="17.00" fill="#b3b3b3" stroke="#444" stroke-width="0.5"/><rect x="1901" y="318.50" width="18" height="17.00" fill="#cccccc" stroke="#444" stroke-width="0.5"/><rect x="1901" y="335.50" width="18" height="17.00" fill="#e5e5e5" stroke="#444" stroke-width="0.5"/><rect x="1901" y="352.50" width="18" height="17.00" fill="#f2f2f2" stroke="#444" stroke-width="0.5"/><rect x="1901" y="369.50" width="18" height="17.00" fill="#ffffff" stroke="#444" stroke-width="0.5"/><rect x="1901" y="386.50" width="18" height="17.00" fill="#2e3192" stroke="#444" stroke-width="0.5"/><rect x="1901" y="403.50" width="18" height="17.00" fill="#00a0e3" stroke="#444" stroke-width="0.5"/><rect x="1901" y="420.50" width="18" height="17.00" fill="#00a651" stroke="#444" stroke-width="0.5"/><rect x="1901" y="437.50" width="18" height="17.00" fill="#ffe500" stroke="#444" stroke-width="0.5"/><rect x="1901" y="454.50" width="18" height="17.00" fill="#e52421" stroke="#444" stroke-width="0.5"/><rect x="1901" y="471.50" width="18" height="17.00" fill="#e4007c" stroke="#444" stroke-width="0.5"/><rect x="1901" y="488.50" width="18" height="17.00" fill="#a54692" stroke="#444" stroke-width="0.5"/><rect x="1901" y="505.50" width="18" height="17.00" fill="#f07f09" stroke="#444" stroke-width="0.5"/><rect x="1901" y="522.50" width="18" height="17.00" fill="#f9bcc0" stroke="#444" stroke-width="0.5"/><rect x="1901" y="539.50" width="18" height="17.00" fill="#7b6e66" stroke="#444" stroke-width="0.5"/><rect x="1901" y="556.50" width="18" height="17.00" fill="#d9d5f0" stroke="#444" stroke-width="0.5"/><rect x="1901" y="573.50" width="18" height="17.00" fill="#aca4dc" stroke="#444" stroke-width="0.5"/><rect x="1901" y="590.50" width="18" height="17.00" fill="#7b8fd0" stroke="#444" stroke-width="0.5"/><rect x="1901" y="607.50" width="18" height="17.00" fill="#8e6fc5" stroke="#444" stroke-width="0.5"/><rect x="1901" y="624.50" width="18" height="17.00" fill="#968fa9" stroke="#444" stroke-width="0.5"/><rect x="1901" y="641.50" width="18" height="17.00" fill="#545f86" stroke="#444" stroke-width="0.5"/><rect x="1901" y="658.50" width="18" height="17.00" fill="#56586c" stroke="#444" stroke-width="0.5"/><rect x="1901" y="675.50" width="18" height="17.00" fill="#6b7b8e" stroke="#444" stroke-width="0.5"/><rect x="1901" y="692.50" width="18" height="17.00" fill="#1592d0" stroke="#444" stroke-width="0.5"/><rect x="1901" y="709.50" width="18" height="17.00" fill="#b5dbf2" stroke="#444" stroke-width="0.5"/><rect x="1901" y="726.50" width="18" height="17.00" fill="#b2bfc8" stroke="#444" stroke-width="0.5"/><rect x="1901" y="743.50" width="18" height="17.00" fill="#8c9ca6" stroke="#444" stroke-width="0.5"/><rect x="1901" y="760.50" width="18" height="17.00" fill="#67727a" stroke="#444" stroke-width="0.5"/><rect x="1901" y="777.50" width="18" height="17.00" fill="#3b4649" stroke="#444" stroke-width="0.5"/><rect x="1901" y="794.50" width="18" height="17.00" fill="#4f6860" stroke="#444" stroke-width="0.5"/><rect x="1901" y="811.50" width="18" height="17.00" fill="#4b7b6b" stroke="#444" stroke-width="0.5"/><rect x="1901" y="828.50" width="18" height="17.00" fill="#6d8683" stroke="#444" stroke-width="0.5"/><rect x="1901" y="845.50" width="18" height="17.00" fill="#5aa48a" stroke="#444" stroke-width="0.5"/><rect x="1901" y="862.50" width="18" height="17.00" fill="#63a27b" stroke="#444" stroke-width="0.5"/><rect x="1901" y="879.50" width="18" height="17.00" fill="#7ad0dc" stroke="#444" stroke-width="0.5"/><rect x="1901" y="896.50" width="18" height="17.00" fill="#6daab8" stroke="#444" stroke-width="0.5"/><rect x="1901" y="913.50" width="18" height="17.00" fill="#b8cbc0" stroke="#444" stroke-width="0.5"/><rect x="1901" y="930.50" width="18" height="17.00" fill="#d8f1d8" stroke="#444" stroke-width="0.5"/><rect x="1901" y="947.50" width="18" height="13.50" fill="#a7e5ad" stroke="#444" stroke-width="0.5"/><path d="M1905,966.5 L1909.5,970.5 L1914,966.5" fill="none" stroke="#aaa" stroke-width="1.5"/><path d="M1904,986 L1908,990 L1904,994 M1909,986 L1913,990 L1909,994" fill="none" stroke="#bbb" stroke-width="1.2"/></svg>
<div style="position:absolute;left:0px;top:1003px;width:1920px;height:37px;background:#f2f2f2"></div>
<svg style="left:0;top:0" width="1920" height="1040"><path d="M19.00,1013.00 L20.56,1013.15 L21.30,1015.46 L22.33,1016.01 L24.66,1015.34 L25.65,1016.56 L24.54,1018.70 L24.88,1019.83 L27.00,1021.00 L26.85,1022.56 L24.54,1023.30 L23.99,1024.33 L24.66,1026.66 L23.44,1027.65 L21.30,1026.54 L20.17,1026.88 L19.00,1029.00 L17.44,1028.85 L16.70,1026.54 L15.67,1025.99 L13.34,1026.66 L12.35,1025.44 L13.46,1023.30 L13.12,1022.17 L11.00,1021.00 L11.15,1019.44 L13.46,1018.70 L14.01,1017.67 L13.34,1015.34 L14.56,1014.35 L16.70,1015.46 L17.83,1015.12 Z" fill="#2b2b2b"/><circle cx="19" cy="1021" r="3" fill="#f2f2f2"/><path d="M28,1029 V1031 H26 Z" fill="#777"/><path d="M1434,1021 L1441,1014 L1448,1021 L1441,1028 Z" fill="none" stroke="#2b2b2b" stroke-width="1.5"/><path d="M1437,1021 H1445 L1441,1025 Z" fill="#c0392b"/><rect x="1451.5" y="1010.5" width="20" height="20" fill="#fff" stroke="#999"/><path d="M1452,1030 L1471,1011" stroke="#b03030" stroke-width="1.3"/><path d="M1641,1013 L1638.5,1020 L1641,1023 L1643.5,1020 Z" fill="none" stroke="#2b2b2b"/><rect x="1639" y="1023.5" width="4" height="4" fill="none" stroke="#2b2b2b"/><rect x="1650" y="1011" width="20" height="20" fill="#111"/><path d="M1883,1003 V1037" stroke="#d8d8d8"/><rect x="1893" y="1014" width="15" height="12" fill="#fff" stroke="#333"/><rect x="1895" y="1016" width="11" height="4" fill="#d33"/><rect x="1895" y="1020" width="11" height="4" fill="#39c"/><path d="M1896,1028 H1906" stroke="#333"/></svg>
<div class="t" style="left:36px;top:1016px;font-size:12px;color:#111;letter-spacing:-0.02px">1. Klick=Ziehen/Skalieren; 2. Klick=Drehen/Skalieren; Dpl-klick auf Hilfsmittel markiert alles; Umschalt+Klick markiert mehrf; Alt+Klick markiert hinteres Obj</div>
<div class="t" style="left:1477px;top:1016px;font-size:12px;color:#111;">Keine</div>
<div class="t" style="left:1676px;top:1016px;font-size:12px;color:#111;letter-spacing:-0.3px">C:0 M:0 Y:0 K:100&nbsp;&nbsp;0,567 pt</div>
<div style="position:absolute;left:0px;top:1040px;width:1920px;height:40px;background:linear-gradient(90deg,#22211d 0%,#252420 45%,#2b2b28 55%,#343533 62%,#2b2c29 68%,#242823 78%,#1f2620 90%,#1d2520 100%)"></div>
<div style="position:absolute;left:48px;top:1040px;width:343px;height:40px;background:#f1f1f1;border:1px solid #cfcfcf;border-bottom:none;box-sizing:border-box"></div>
<svg style="left:0;top:0" width="1920" height="1080"><path d="M16,1052.5 L22.5,1051.6 V1059.3 H16 Z M23.5,1051.4 L32,1050.2 V1059.3 H23.5 Z M16,1060.3 H22.5 V1068 L16,1067.1 Z M23.5,1060.3 H32 V1069.4 L23.5,1068.2 Z" fill="#fff"/><circle cx="70.5" cy="1057.5" r="5" fill="none" stroke="#333" stroke-width="1.2"/><path d="M67,1061 L60.5,1067.5" stroke="#333" stroke-width="1.4"/><path d="M408,1053 V1067 M408,1055 H420 V1065 H408 M422,1053 V1067" fill="none" stroke="#fff" stroke-width="1.3"/><rect x="421" y="1057" width="3" height="3" fill="#fff"/><circle cx="467" cy="1059.5" r="12.3" fill="#1f7bd3"/><path d="M455.5,1055 A12.3,12.3 0 0 1 479.5,1061 L469.5,1061 Q469,1053 459.5,1053.5 Z" fill="#4cc47e"/><circle cx="465" cy="1061" r="3.6" fill="#0d3a6e"/><path d="M455.5,1062 Q457,1070 467,1071.8 Q460,1066 462,1060 Z" fill="#1a5fb0"/><path d="M504,1050 H513 L515,1052 H527 V1069 H504 Z" fill="#f6c94d"/><rect x="510" y="1061" width="11" height="8" fill="#3e86c7"/><rect x="513" y="1064" width="5" height="4" fill="#f6c94d"/><rect x="496" y="1078" width="40" height="2" fill="#b5a98a"/><path d="M553,1057 L565,1048 L577,1057 V1071 H553 Z" fill="#1a6cbf"/><path d="M553,1057 L565,1065 L577,1057 V1071 H553 Z" fill="#2ea1f0"/><path d="M555,1056 L565,1062 L575,1056 L565,1050 Z" fill="#fff"/><rect x="601" y="1052" width="24" height="19" rx="2" fill="#f4f4f4"/><path d="M607,1052 V1049 H619 V1052" fill="none" stroke="#2aa0d8" stroke-width="1.5"/><rect x="607" y="1057" width="5" height="5" fill="#f25022"/><rect x="613" y="1057" width="5" height="5" fill="#7fba00"/><rect x="607" y="1063" width="5" height="5" fill="#00a4ef"/><rect x="613" y="1063" width="5" height="5" fill="#ffb900"/><circle cx="663" cy="1060" r="11.5" fill="#1e7ac9"/><path d="M653,1062 Q660,1058 672,1061 Q662,1064 653,1062 Z M660,1055 Q666,1052 672,1054 Q666,1057 660,1055Z" fill="#fff"/><circle cx="712" cy="1060" r="11.5" fill="#db4437"/><path d="M712,1060 L702,1066 A11.5,11.5 0 0 0 717,1071 Z" fill="#0f9d58"/><path d="M712,1060 L723.5,1060 A11.5,11.5 0 0 1 717,1071 Z" fill="#f4b400"/><circle cx="712" cy="1060" r="5" fill="#fff"/><circle cx="712" cy="1060" r="3.8" fill="#4285f4"/><rect x="749" y="1048" width="24" height="24" rx="2" fill="#2b3ea8"/><path d="M753,1066 H769 L766,1055 H756 Z" fill="#fff"/><path d="M755,1064 L765,1058 L767,1064 Z" fill="#2b3ea8"/><rect x="754" y="1051" width="14" height="2" fill="#fff"/><defs><linearGradient id="og" x1="0" y1="0" x2="1" y2="0"><stop offset="0" stop-color="#c3161c"/><stop offset="1" stop-color="#eb5a1a"/></linearGradient></defs><path d="M802,1052 L814,1048 L820,1051 V1069 L814,1072 L802,1068 Z" fill="url(#og)"/><path d="M806,1054 L814,1052 V1068 L806,1066 Z" fill="#2a2a27"/><circle cx="859" cy="1060" r="11.5" fill="#2aa0da"/><path d="M852,1059 L866,1053 L863,1067 L859,1063 L857,1066 V1061 Z" fill="#fff"/><rect x="896" y="1049" width="23" height="22" fill="#3a8ee6"/><path d="M896,1071 V1062 L905,1054 L919,1066 V1071 Z" fill="#1d5fb0"/><rect x="911" y="1052" width="4" height="4" fill="#fff"/><rect x="888" y="1078" width="40" height="2" fill="#b5a98a"/><circle cx="957" cy="1060" r="11" fill="#0f2a12" stroke="#8cc44a" stroke-width="2"/><path d="M949,1054 L953.5,1049.5 L963,1060 L963.5,1064.5 L959,1064 Z" fill="#e8e8e8"/><path d="M951,1056 L955,1052" stroke="#888" stroke-width="1"/><path d="M961,1063 L963.5,1065.5" stroke="#ccc" stroke-width="1"/><rect x="937" y="1078" width="40" height="2" fill="#b5a98a"/><path d="M1514,1051 A9,9 0 1 0 1523,1064 A8,8 0 0 1 1514,1051 Z" fill="#f6c22a"/><path d="M1612,1063 L1617,1058 L1622,1063" fill="none" stroke="#fff" stroke-width="1.3"/><path d="M1634,1057 H1637 L1641,1053 V1067 L1637,1063 H1634 Z" fill="none" stroke="#fff" stroke-width="1.1"/><path d="M1644,1056 Q1646,1060 1644,1064 M1647,1054 Q1650,1060 1647,1066" fill="none" stroke="#fff" stroke-width="1.1"/><rect x="1660" y="1056" width="9" height="8" rx="1" fill="none" stroke="#fff" stroke-width="1.1"/><path d="M1669,1058 L1672,1056 V1064 L1669,1062" fill="none" stroke="#fff"/><rect x="1686" y="1053" width="11" height="9" fill="none" stroke="#fff" stroke-width="1.1"/><path d="M1691,1062 V1066 M1687,1066 H1695" stroke="#fff" stroke-width="1.1"/><rect x="1681" y="1052" width="5" height="5" fill="none" stroke="#fff"/><rect x="1701" y="1040" width="33" height="40" fill="#3f4a42"/><path d="M1710,1067 Q1707,1062 1713,1060 L1722,1051 L1725,1054 L1716,1063 Q1713,1068 1710,1067 M1720,1058 Q1726,1058 1724,1062" fill="none" stroke="#fff" stroke-width="1.1"/><rect x="1737.5" y="1053.5" width="22" height="12" fill="none" stroke="#fff" stroke-width="1.1"/><rect x="1740.0" y="1056.0" width="1.4" height="1.2" fill="#fff"/><rect x="1740.0" y="1058.3" width="1.4" height="1.2" fill="#fff"/><rect x="1742.6" y="1056.0" width="1.4" height="1.2" fill="#fff"/><rect x="1742.6" y="1058.3" width="1.4" height="1.2" fill="#fff"/><rect x="1745.2" y="1056.0" width="1.4" height="1.2" fill="#fff"/><rect x="1745.2" y="1058.3" width="1.4" height="1.2" fill="#fff"/><rect x="1747.8" y="1056.0" width="1.4" height="1.2" fill="#fff"/><rect x="1747.8" y="1058.3" width="1.4" height="1.2" fill="#fff"/><rect x="1750.4" y="1056.0" width="1.4" height="1.2" fill="#fff"/><rect x="1750.4" y="1058.3" width="1.4" height="1.2" fill="#fff"/><rect x="1753.0" y="1056.0" width="1.4" height="1.2" fill="#fff"/><rect x="1753.0" y="1058.3" width="1.4" height="1.2" fill="#fff"/><rect x="1755.6" y="1056.0" width="1.4" height="1.2" fill="#fff"/><rect x="1755.6" y="1058.3" width="1.4" height="1.2" fill="#fff"/><rect x="1743" y="1061" width="11" height="1.5" fill="#fff"/><path d="M1879.5,1052.5 H1895.5 V1064.5 H1890 L1887.5,1067 L1885,1064.5 H1879.5 Z" fill="none" stroke="#fff" stroke-width="1.2"/><path d="M1915.5,1040 V1080" stroke="#666"/></svg>
<div class="t" style="left:88px;top:1053px;font-size:15px;color:#333;letter-spacing:-0.15px">Zur Suche Text hier eingeben</div>
<div class="t" style="left:1533px;top:1054px;font-size:13px;color:#fff;letter-spacing:-0.2px">14°C</div>
<div class="t" style="left:1571px;top:1054px;font-size:13px;color:#fff;letter-spacing:-0.2px">Klar</div>
<div class="t" style="left:1772px;top:1054px;font-size:11.5px;color:#fff;letter-spacing:-0.2px">DEU</div>
<div class="t" style="left:1819px;top:1045px;font-size:13px;color:#fff;letter-spacing:0.3px">01:39</div>
<div class="t" style="left:1807px;top:1062px;font-size:12px;color:#fff;letter-spacing:-0.7px">18.05.2022</div>
</body></html>
